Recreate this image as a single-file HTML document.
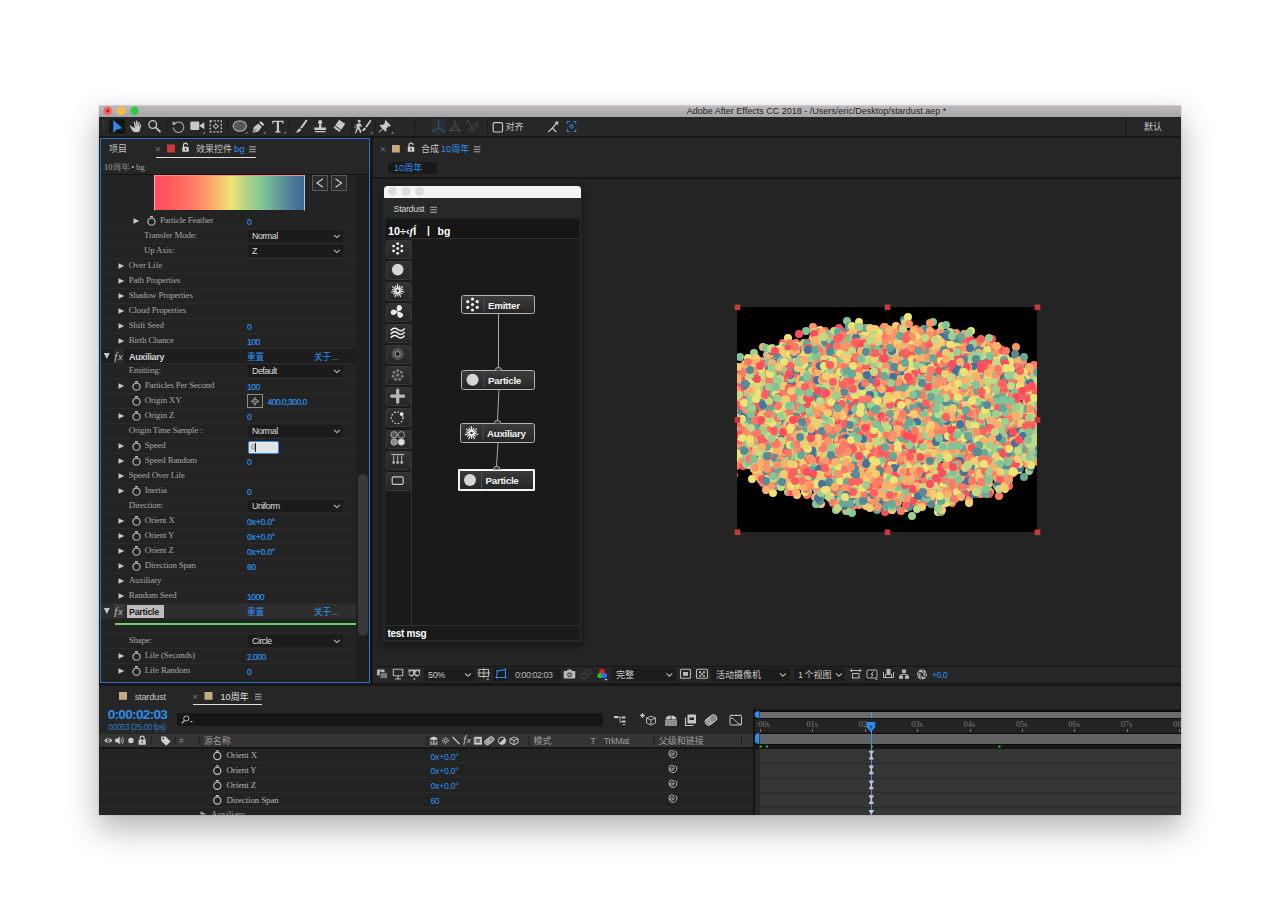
<!DOCTYPE html>
<html><head><meta charset="utf-8"><title>Adobe After Effects CC 2018</title>
<style>
html,body{margin:0;padding:0;background:#fff;}
body{width:1280px;height:923px;position:relative;overflow:hidden;font-family:"Liberation Sans",sans-serif;}
#root{position:absolute;left:0;top:0;width:1280px;height:923px;overflow:hidden;}
#root div,#root span{position:absolute;display:block;box-sizing:border-box;white-space:nowrap;}
.fs{font-family:"Liberation Sans",sans-serif;}
.fr{font-family:"Liberation Serif",serif;}
#ov{position:absolute;left:0;top:0;width:1280px;height:923px;pointer-events:none;}
#ov text{font-family:"Liberation Sans","Noto Sans CJK SC",sans-serif;}
#ov text.sr{font-family:"Liberation Serif","Noto Serif CJK SC",serif;}
</style></head>
<body><div id="root">
<div style="left:99px;top:106px;width:1082px;height:708.5px;background:#161616;box-shadow:0 13px 30px 1px rgba(0,0,0,.3),0 0 2px rgba(0,0,0,.2);"></div>
<div style="left:99px;top:105px;width:1082px;height:12px;background:linear-gradient(#bdb9bc,#a8a5a8);border-top:1px solid #cfcccf;"></div>
<span class="fs" style="left:600px;top:105px;font-size:9px;color:#1e1e1e;line-height:12px;width:433px;text-align:center;">Adobe After Effects CC 2018 - /Users/eric/Desktop/stardust.aep *</span>
<div style="left:99px;top:117px;width:1082px;height:19px;background:#272727;"></div>
<div style="left:109px;top:119px;width:16px;height:15px;background:#161616;"></div>
<div style="left:432px;top:119px;width:13.5px;height:15px;background:#2d2d2d;"></div>
<div style="left:100px;top:138px;width:270px;height:545px;background:#232323;border:1px solid #2b72c2;"></div>
<div style="left:101px;top:139px;width:268px;height:35px;background:#262626;"></div>
<div style="left:101px;top:174px;width:268px;height:1px;background:#141414;"></div>
<span class="fs" style="left:234px;top:142px;font-size:9.5px;color:#2e92ee;line-height:14px;">bg</span>
<div style="left:156px;top:157px;width:100px;height:1.3px;background:#e0e0e0;"></div>
<span class="fr" style="left:131.238px;top:160.3px;font-size:8.5px;color:#a8a8a8;line-height:14px;">• bg</span>
<div style="left:154px;top:175px;width:151px;height:36px;background:linear-gradient(90deg,#ff4d5e 0%,#ff5a5c 10%,#ff7a66 25%,#fca06a 36%,#f6c56e 44%,#f0e474 51%,#b9d585 60%,#7fc597 72%,#5f9a96 84%,#4a7799 93%,#3f6896 100%);border:1px solid #d8d8d8;border-top-color:#ff8a8a;border-bottom-color:#222;border-left-color:#ffb0b0;border-right-color:#b8c8da;"></div>
<div style="left:312px;top:175px;width:16px;height:16px;background:#2c2c2c;border:1px solid #5a5a5a;"></div>
<div style="left:330.5px;top:175px;width:16px;height:16px;background:#2c2c2c;border:1px solid #5a5a5a;"></div>
<div style="left:356px;top:175px;width:13px;height:507px;background:#1f1f1f;"></div>
<div style="left:357.5px;top:474px;width:10px;height:162px;background:#383838;border-radius:5px;"></div>
<div style="left:101px;top:228px;width:255px;height:1px;background:#2a2a2a;"></div>
<div style="left:101px;top:243px;width:255px;height:1px;background:#2a2a2a;"></div>
<div style="left:101px;top:258px;width:255px;height:1px;background:#2a2a2a;"></div>
<div style="left:101px;top:273px;width:255px;height:1px;background:#2a2a2a;"></div>
<div style="left:101px;top:288px;width:255px;height:1px;background:#2a2a2a;"></div>
<div style="left:101px;top:303px;width:255px;height:1px;background:#2a2a2a;"></div>
<div style="left:101px;top:318px;width:255px;height:1px;background:#2a2a2a;"></div>
<div style="left:101px;top:333px;width:255px;height:1px;background:#2a2a2a;"></div>
<div style="left:101px;top:348px;width:255px;height:1px;background:#2a2a2a;"></div>
<div style="left:101px;top:363px;width:255px;height:1px;background:#2a2a2a;"></div>
<div style="left:101px;top:378px;width:255px;height:1px;background:#2a2a2a;"></div>
<div style="left:101px;top:393px;width:255px;height:1px;background:#2a2a2a;"></div>
<div style="left:101px;top:408px;width:255px;height:1px;background:#2a2a2a;"></div>
<div style="left:101px;top:423px;width:255px;height:1px;background:#2a2a2a;"></div>
<div style="left:101px;top:438px;width:255px;height:1px;background:#2a2a2a;"></div>
<div style="left:101px;top:453px;width:255px;height:1px;background:#2a2a2a;"></div>
<div style="left:101px;top:468px;width:255px;height:1px;background:#2a2a2a;"></div>
<div style="left:101px;top:483px;width:255px;height:1px;background:#2a2a2a;"></div>
<div style="left:101px;top:498px;width:255px;height:1px;background:#2a2a2a;"></div>
<div style="left:101px;top:513px;width:255px;height:1px;background:#2a2a2a;"></div>
<div style="left:101px;top:528px;width:255px;height:1px;background:#2a2a2a;"></div>
<div style="left:101px;top:543px;width:255px;height:1px;background:#2a2a2a;"></div>
<div style="left:101px;top:558px;width:255px;height:1px;background:#2a2a2a;"></div>
<div style="left:101px;top:573px;width:255px;height:1px;background:#2a2a2a;"></div>
<div style="left:101px;top:588px;width:255px;height:1px;background:#2a2a2a;"></div>
<div style="left:101px;top:603px;width:255px;height:1px;background:#2a2a2a;"></div>
<div style="left:101px;top:618px;width:255px;height:1px;background:#2a2a2a;"></div>
<div style="left:101px;top:633px;width:255px;height:1px;background:#2a2a2a;"></div>
<div style="left:101px;top:648px;width:255px;height:1px;background:#2a2a2a;"></div>
<div style="left:101px;top:663px;width:255px;height:1px;background:#2a2a2a;"></div>
<span class="fr" style="left:160px;top:213.4px;font-size:8.9px;color:#a6a6a6;line-height:14px;letter-spacing:-.17px;">Particle Feather</span>
<span class="fs" style="left:247px;top:215.35px;font-size:8.6px;color:#2e92ee;line-height:14px;letter-spacing:-0.55px;-webkit-text-stroke:.2px #2e92ee;">0</span>
<span class="fr" style="left:144px;top:228.4px;font-size:8.9px;color:#a6a6a6;line-height:14px;letter-spacing:-.17px;">Transfer Mode:</span>
<div style="left:248px;top:229.75px;width:95px;height:12.3px;background:#1b1b1b;border-radius:1.5px;"></div>
<span class="fs" style="left:252px;top:229.25px;font-size:8.9px;color:#dcdcdc;line-height:14px;letter-spacing:-.5px;">Normal</span>
<span class="fr" style="left:144px;top:243.4px;font-size:8.9px;color:#a6a6a6;line-height:14px;letter-spacing:-.17px;">Up Axis:</span>
<div style="left:248px;top:244.75px;width:95px;height:12.3px;background:#1b1b1b;border-radius:1.5px;"></div>
<span class="fs" style="left:252px;top:244.25px;font-size:8.9px;color:#dcdcdc;line-height:14px;letter-spacing:-.5px;">Z</span>
<span class="fr" style="left:128.75px;top:258.4px;font-size:8.9px;color:#a6a6a6;line-height:14px;letter-spacing:-.17px;">Over Life</span>
<span class="fr" style="left:128.75px;top:273.4px;font-size:8.9px;color:#a6a6a6;line-height:14px;letter-spacing:-.17px;">Path Properties</span>
<span class="fr" style="left:128.75px;top:288.4px;font-size:8.9px;color:#a6a6a6;line-height:14px;letter-spacing:-.17px;">Shadow Properties</span>
<span class="fr" style="left:128.75px;top:303.4px;font-size:8.9px;color:#a6a6a6;line-height:14px;letter-spacing:-.17px;">Cloud Properties</span>
<span class="fr" style="left:128.75px;top:318.4px;font-size:8.9px;color:#a6a6a6;line-height:14px;letter-spacing:-.17px;">Shift Seed</span>
<span class="fs" style="left:247px;top:320.35px;font-size:8.6px;color:#2e92ee;line-height:14px;letter-spacing:-0.55px;-webkit-text-stroke:.2px #2e92ee;">0</span>
<span class="fr" style="left:128.75px;top:333.4px;font-size:8.9px;color:#a6a6a6;line-height:14px;letter-spacing:-.17px;">Birth Chance</span>
<span class="fs" style="left:247px;top:335.35px;font-size:8.6px;color:#2e92ee;line-height:14px;letter-spacing:-0.55px;-webkit-text-stroke:.2px #2e92ee;">100</span>
<div style="left:101px;top:349px;width:255px;height:14px;background:#1d1d1d;"></div>
<div style="left:113.5px;top:349px;width:10px;height:14px;background:#2b2b2b;"></div>
<span class="fr" style="left:114.3px;top:349.05px;font-size:11px;color:#c0c0c0;line-height:14px;"><i>f</i></span>
<span class="fs" style="left:118.2px;top:349.95px;font-size:8.5px;color:#c0c0c0;line-height:14px;"><i>x</i></span>
<span class="fs" style="left:129px;top:350.15px;font-size:9px;color:#d4d4d4;line-height:14px;font-weight:bold;letter-spacing:-.32px;">Auxiliary</span>
<span class="fs" style="left:331.5px;top:349.75px;font-size:8.6px;color:#2e92ee;line-height:14px;">...</span>
<span class="fr" style="left:128.75px;top:363.4px;font-size:8.9px;color:#a6a6a6;line-height:14px;letter-spacing:-.17px;">Emitting:</span>
<div style="left:248px;top:364.75px;width:95px;height:12.3px;background:#1b1b1b;border-radius:1.5px;"></div>
<span class="fs" style="left:252px;top:364.25px;font-size:8.9px;color:#dcdcdc;line-height:14px;letter-spacing:-.5px;">Default</span>
<span class="fr" style="left:144.75px;top:378.4px;font-size:8.9px;color:#a6a6a6;line-height:14px;letter-spacing:-.17px;">Particles Per Second</span>
<span class="fs" style="left:247px;top:380.35px;font-size:8.6px;color:#2e92ee;line-height:14px;letter-spacing:-0.55px;-webkit-text-stroke:.2px #2e92ee;">100</span>
<span class="fr" style="left:144.75px;top:393.4px;font-size:8.9px;color:#a6a6a6;line-height:14px;letter-spacing:-.17px;">Origin XY</span>
<div style="left:246.8px;top:394.45px;width:16.4px;height:13.5px;background:#262626;border:1px solid #8c8c8c;"></div>
<span class="fs" style="left:267.5px;top:395.35px;font-size:8.6px;color:#2e92ee;line-height:14px;letter-spacing:-0.55px;-webkit-text-stroke:.2px #2e92ee;">400.0,300.0</span>
<span class="fr" style="left:144.75px;top:408.4px;font-size:8.9px;color:#a6a6a6;line-height:14px;letter-spacing:-.17px;">Origin Z</span>
<span class="fs" style="left:247px;top:410.35px;font-size:8.6px;color:#2e92ee;line-height:14px;letter-spacing:-0.55px;-webkit-text-stroke:.2px #2e92ee;">0</span>
<span class="fr" style="left:128.75px;top:423.4px;font-size:8.9px;color:#a6a6a6;line-height:14px;letter-spacing:-.17px;">Origin Time Sample :</span>
<div style="left:248px;top:424.75px;width:95px;height:12.3px;background:#1b1b1b;border-radius:1.5px;"></div>
<span class="fs" style="left:252px;top:424.25px;font-size:8.9px;color:#dcdcdc;line-height:14px;letter-spacing:-.5px;">Normal</span>
<span class="fr" style="left:144.75px;top:438.4px;font-size:8.9px;color:#a6a6a6;line-height:14px;letter-spacing:-.17px;">Speed</span>
<div style="left:248px;top:441.25px;width:31px;height:12.3px;background:#e4e4e4;border:1px solid #2d8ceb;border-radius:2px;"></div>
<span class="fr" style="left:251px;top:440.25px;font-size:8.6px;color:#555;line-height:14px;">0</span>
<div style="left:255.3px;top:443.25px;width:1px;height:9px;background:#222;"></div>
<span class="fr" style="left:144.75px;top:453.4px;font-size:8.9px;color:#a6a6a6;line-height:14px;letter-spacing:-.17px;">Speed Random</span>
<span class="fs" style="left:247px;top:455.35px;font-size:8.6px;color:#2e92ee;line-height:14px;letter-spacing:-0.55px;-webkit-text-stroke:.2px #2e92ee;">0</span>
<span class="fr" style="left:128.75px;top:468.4px;font-size:8.9px;color:#a6a6a6;line-height:14px;letter-spacing:-.17px;">Speed Over Life</span>
<span class="fr" style="left:144.75px;top:483.4px;font-size:8.9px;color:#a6a6a6;line-height:14px;letter-spacing:-.17px;">Inertia</span>
<span class="fs" style="left:247px;top:485.35px;font-size:8.6px;color:#2e92ee;line-height:14px;letter-spacing:-0.55px;-webkit-text-stroke:.2px #2e92ee;">0</span>
<span class="fr" style="left:128.75px;top:498.4px;font-size:8.9px;color:#a6a6a6;line-height:14px;letter-spacing:-.17px;">Direction:</span>
<div style="left:248px;top:499.75px;width:95px;height:12.3px;background:#1b1b1b;border-radius:1.5px;"></div>
<span class="fs" style="left:252px;top:499.25px;font-size:8.9px;color:#dcdcdc;line-height:14px;letter-spacing:-.5px;">Uniform</span>
<span class="fr" style="left:144.75px;top:513.4px;font-size:8.9px;color:#a6a6a6;line-height:14px;letter-spacing:-.17px;">Orient X</span>
<span class="fs" style="left:247px;top:515.35px;font-size:8.6px;color:#2e92ee;line-height:14px;letter-spacing:-0.2px;-webkit-text-stroke:.2px #2e92ee;">0x+0.0°</span>
<span class="fr" style="left:144.75px;top:528.4px;font-size:8.9px;color:#a6a6a6;line-height:14px;letter-spacing:-.17px;">Orient Y</span>
<span class="fs" style="left:247px;top:530.35px;font-size:8.6px;color:#2e92ee;line-height:14px;letter-spacing:-0.2px;-webkit-text-stroke:.2px #2e92ee;">0x+0.0°</span>
<span class="fr" style="left:144.75px;top:543.4px;font-size:8.9px;color:#a6a6a6;line-height:14px;letter-spacing:-.17px;">Orient Z</span>
<span class="fs" style="left:247px;top:545.35px;font-size:8.6px;color:#2e92ee;line-height:14px;letter-spacing:-0.2px;-webkit-text-stroke:.2px #2e92ee;">0x+0.0°</span>
<span class="fr" style="left:144.75px;top:558.4px;font-size:8.9px;color:#a6a6a6;line-height:14px;letter-spacing:-.17px;">Direction Span</span>
<span class="fs" style="left:247px;top:560.35px;font-size:8.6px;color:#2e92ee;line-height:14px;letter-spacing:-0.55px;-webkit-text-stroke:.2px #2e92ee;">60</span>
<span class="fr" style="left:128.75px;top:573.4px;font-size:8.9px;color:#a6a6a6;line-height:14px;letter-spacing:-.17px;">Auxiliary</span>
<span class="fr" style="left:128.75px;top:588.4px;font-size:8.9px;color:#a6a6a6;line-height:14px;letter-spacing:-.17px;">Random Seed</span>
<span class="fs" style="left:247px;top:590.35px;font-size:8.6px;color:#2e92ee;line-height:14px;letter-spacing:-0.55px;-webkit-text-stroke:.2px #2e92ee;">1000</span>
<div style="left:101px;top:604px;width:255px;height:14px;background:#2e2e2e;"></div>
<div style="left:113.5px;top:604px;width:10px;height:14px;background:#383838;"></div>
<span class="fr" style="left:114.3px;top:604.05px;font-size:11px;color:#c0c0c0;line-height:14px;"><i>f</i></span>
<span class="fs" style="left:118.2px;top:604.95px;font-size:8.5px;color:#c0c0c0;line-height:14px;"><i>x</i></span>
<div style="left:126.7px;top:604.5px;width:37.6px;height:13px;background:#bcbcbc;"></div>
<span class="fs" style="left:129px;top:604.95px;font-size:9px;color:#1c1c1c;line-height:14px;font-weight:bold;letter-spacing:-.32px;">Particle</span>
<span class="fs" style="left:331.5px;top:604.75px;font-size:8.6px;color:#2e92ee;line-height:14px;">...</span>
<div style="left:115px;top:622.5px;width:241px;height:2px;background:#5fd65f;"></div>
<span class="fr" style="left:128.75px;top:633.4px;font-size:8.9px;color:#a6a6a6;line-height:14px;letter-spacing:-.17px;">Shape:</span>
<div style="left:248px;top:634.75px;width:95px;height:12.3px;background:#1b1b1b;border-radius:1.5px;"></div>
<span class="fs" style="left:252px;top:634.25px;font-size:8.9px;color:#dcdcdc;line-height:14px;letter-spacing:-.5px;">Circle</span>
<span class="fr" style="left:144.75px;top:648.4px;font-size:8.9px;color:#a6a6a6;line-height:14px;letter-spacing:-.17px;">Life (Seconds)</span>
<span class="fs" style="left:247px;top:650.35px;font-size:8.6px;color:#2e92ee;line-height:14px;letter-spacing:-0.55px;-webkit-text-stroke:.2px #2e92ee;">2.000</span>
<span class="fr" style="left:144.75px;top:663.4px;font-size:8.9px;color:#a6a6a6;line-height:14px;letter-spacing:-.17px;">Life Random</span>
<span class="fs" style="left:247px;top:665.35px;font-size:8.6px;color:#2e92ee;line-height:14px;letter-spacing:-0.55px;-webkit-text-stroke:.2px #2e92ee;">0</span>
<div style="left:373px;top:138px;width:808px;height:39px;background:#262626;"></div>
<div style="left:373px;top:179px;width:808px;height:487px;background:#242424;"></div>
<div style="left:373px;top:667px;width:808px;height:16px;background:#262626;"></div>
<div style="left:388px;top:162px;width:49px;height:11.5px;background:#1a1a1a;border-radius:1.5px;"></div>
<div style="left:737px;top:307px;width:300px;height:225px;background:#000;"></div>
<div style="left:383px;top:186px;width:198.5px;height:456px;background:transparent;box-shadow:0 3px 9px rgba(0,0,0,.45);border-radius:3px 3px 0 0;"></div>
<div style="left:384px;top:186px;width:196.5px;height:12.5px;background:#f4f4f4;border-radius:3.5px 3.5px 0 0;"></div>
<div style="left:384px;top:198px;width:196.5px;height:443px;background:#1b1a1b;border:1px solid #2a2a2a;border-top:none;border-right:2px solid #242424;border-left:2px solid #242424;"></div>
<div style="left:384px;top:198px;width:196.5px;height:19.5px;background:#282828;"></div>
<span class="fs" style="left:393.5px;top:202.3px;font-size:9px;color:#d2d2d2;line-height:14px;letter-spacing:-.35px;">Stardust</span>
<div style="left:386px;top:220px;width:192.5px;height:17.8px;background:#171617;"></div>
<span class="fs" style="left:388px;top:223.7px;font-size:10.8px;color:#fff;line-height:14px;font-weight:bold;letter-spacing:0px;">10÷‹<i style="font-family:'Liberation Serif',serif">f</i>Í</span>
<span class="fs" style="left:427px;top:223.7px;font-size:10px;color:#fff;line-height:14px;font-weight:bold;">|</span>
<span class="fs" style="left:437.5px;top:223.7px;font-size:10.5px;color:#fff;line-height:14px;font-weight:bold;">bg</span>
<div style="left:386px;top:237.5px;width:192.5px;height:1px;background:#2e2e2e;"></div>
<div style="left:410.5px;top:239px;width:1px;height:386px;background:#2e2e2e;"></div>
<div style="left:386px;top:624.5px;width:192.5px;height:1px;background:#2e2e2e;"></div>
<span class="fs" style="left:387.5px;top:626.5px;font-size:10px;color:#fff;line-height:14px;font-weight:bold;letter-spacing:-.3px;">test msg</span>
<div style="left:386px;top:239.5px;width:24.5px;height:19px;background:linear-gradient(#323232,#262626);border:1px solid #393939;border-radius:1.5px;"></div>
<div style="left:386px;top:260.5px;width:24.5px;height:19px;background:linear-gradient(#323232,#262626);border:1px solid #393939;border-radius:1.5px;"></div>
<div style="left:386px;top:281.5px;width:24.5px;height:19px;background:linear-gradient(#323232,#262626);border:1px solid #393939;border-radius:1.5px;"></div>
<div style="left:386px;top:302.5px;width:24.5px;height:19px;background:linear-gradient(#323232,#262626);border:1px solid #393939;border-radius:1.5px;"></div>
<div style="left:386px;top:324px;width:24.5px;height:19px;background:linear-gradient(#323232,#262626);border:1px solid #393939;border-radius:1.5px;"></div>
<div style="left:386px;top:345px;width:24.5px;height:19px;background:linear-gradient(#323232,#262626);border:1px solid #393939;border-radius:1.5px;"></div>
<div style="left:386px;top:366px;width:24.5px;height:19px;background:linear-gradient(#323232,#262626);border:1px solid #393939;border-radius:1.5px;"></div>
<div style="left:386px;top:387px;width:24.5px;height:19px;background:linear-gradient(#323232,#262626);border:1px solid #393939;border-radius:1.5px;"></div>
<div style="left:386px;top:408px;width:24.5px;height:19px;background:linear-gradient(#323232,#262626);border:1px solid #393939;border-radius:1.5px;"></div>
<div style="left:386px;top:429.5px;width:24.5px;height:19px;background:linear-gradient(#323232,#262626);border:1px solid #393939;border-radius:1.5px;"></div>
<div style="left:386px;top:450.5px;width:24.5px;height:19px;background:linear-gradient(#323232,#262626);border:1px solid #393939;border-radius:1.5px;"></div>
<div style="left:386px;top:471.5px;width:24.5px;height:19px;background:linear-gradient(#323232,#262626);border:1px solid #393939;border-radius:1.5px;"></div>
<div style="left:460.5px;top:295px;width:74.5px;height:19px;background:linear-gradient(#3c3c3c,#262626);border:1px solid #b4b4b4;border-radius:2.5px;"></div>
<span class="fs" style="left:488px;top:298.6px;font-size:9.8px;color:#f2f2f2;line-height:14px;font-weight:bold;letter-spacing:-.3px;">Emitter</span>
<div style="left:460.5px;top:370px;width:74.5px;height:19.5px;background:linear-gradient(#3c3c3c,#262626);border:1px solid #b4b4b4;border-radius:2.5px;"></div>
<span class="fs" style="left:488px;top:373.85px;font-size:9.8px;color:#f2f2f2;line-height:14px;font-weight:bold;letter-spacing:-.3px;">Particle</span>
<div style="left:459.5px;top:423px;width:75px;height:20px;background:linear-gradient(#3c3c3c,#262626);border:1px solid #b4b4b4;border-radius:2.5px;"></div>
<span class="fs" style="left:487px;top:427.1px;font-size:9.8px;color:#f2f2f2;line-height:14px;font-weight:bold;letter-spacing:-.3px;">Auxiliary</span>
<div style="left:458px;top:469px;width:77px;height:22px;background:linear-gradient(#3a3a3a,#262626);border:2px solid #f4f4f4;border-radius:1px;"></div>
<span class="fs" style="left:485.5px;top:474.1px;font-size:9.8px;color:#f2f2f2;line-height:14px;font-weight:bold;letter-spacing:-.3px;">Particle</span>
<div style="left:424px;top:668px;width:50.5px;height:12.8px;background:#1c1c1c;border-radius:1.5px;"></div>
<span class="fs" style="left:428px;top:668px;font-size:8.9px;color:#c8c8c8;line-height:14px;letter-spacing:-.3px;">50%</span>
<div style="left:493px;top:667.5px;width:14.5px;height:13.5px;background:#1a1a1a;"></div>
<div style="left:509px;top:668px;width:52px;height:12.8px;background:#1e1e1e;"></div>
<span class="fs" style="left:515px;top:668.2px;font-size:8.9px;color:#b4b4b4;line-height:14px;letter-spacing:-.45px;">0:00:02:03</span>
<div style="left:611px;top:668px;width:65px;height:12.8px;background:#1c1c1c;border-radius:1.5px;"></div>
<div style="left:711px;top:668px;width:78.5px;height:12.8px;background:#1c1c1c;border-radius:1.5px;"></div>
<div style="left:794px;top:668px;width:51px;height:12.8px;background:#1c1c1c;border-radius:1.5px;"></div>
<span class="fs" style="left:798px;top:668px;font-size:8.9px;color:#c8c8c8;line-height:14px;">1</span>
<div style="left:865px;top:667.5px;width:14px;height:13.5px;background:#1c1c1c;"></div>
<span class="fs" style="left:932px;top:668px;font-size:8.6px;color:#2e92ee;line-height:14px;letter-spacing:-.5px;">+0.0</span>
<div style="left:99px;top:686px;width:1082px;height:128.5px;background:#262626;"></div>
<span class="fs" style="left:134.7px;top:689.5px;font-size:9.3px;color:#c4c4c4;line-height:14px;letter-spacing:-.25px;">stardust</span>
<div style="left:193px;top:704px;width:69px;height:1.4px;background:#e0e0e0;"></div>
<span class="fs" style="left:107.7px;top:707.3px;font-size:13.6px;color:#2d8ceb;line-height:16px;font-weight:bold;letter-spacing:-.7px;">0:00:02:03</span>
<span class="fs" style="left:108.3px;top:721.8px;font-size:8.3px;color:#2a76c4;line-height:10px;letter-spacing:-.45px;">00053 (25.00 fps)</span>
<div style="left:177px;top:713px;width:426px;height:13px;background:#161616;border-radius:2px;"></div>
<div style="left:99px;top:734px;width:654px;height:13px;background:#343434;"></div>
<span class="fs" style="left:179px;top:734px;font-size:8px;color:#8a8a8a;line-height:14px;"><i>#</i></span>
<span class="fr" style="left:463.3px;top:733.3px;font-size:10.5px;color:#cfcfcf;line-height:14px;"><i>f</i></span>
<span class="fs" style="left:466.8px;top:734.2px;font-size:8px;color:#cfcfcf;line-height:14px;"><i>x</i></span>
<span class="fs" style="left:590.5px;top:734.3px;font-size:8.6px;color:#9c9c9c;line-height:14px;">T</span>
<span class="fs" style="left:603.8px;top:734.3px;font-size:8.9px;color:#9c9c9c;line-height:14px;letter-spacing:-.35px;">TrkMat</span>
<div style="left:99px;top:747px;width:654px;height:67.5px;background:#232323;"></div>
<div style="left:99px;top:747px;width:654px;height:1.5px;background:#161616;"></div>
<div style="left:99px;top:762px;width:654px;height:1px;background:#2a2a2a;"></div>
<span class="fr" style="left:226.5px;top:748px;font-size:8.9px;color:#b4b4b4;line-height:14px;letter-spacing:-.1px;">Orient X</span>
<span class="fs" style="left:430.5px;top:749.6px;font-size:8.6px;color:#2e92ee;line-height:14px;letter-spacing:-0.2px;">0x+0.0°</span>
<div style="left:99px;top:777px;width:654px;height:1px;background:#2a2a2a;"></div>
<span class="fr" style="left:226.5px;top:762.85px;font-size:8.9px;color:#b4b4b4;line-height:14px;letter-spacing:-.1px;">Orient Y</span>
<span class="fs" style="left:430.5px;top:764.45px;font-size:8.6px;color:#2e92ee;line-height:14px;letter-spacing:-0.2px;">0x+0.0°</span>
<div style="left:99px;top:792px;width:654px;height:1px;background:#2a2a2a;"></div>
<span class="fr" style="left:226.5px;top:777.7px;font-size:8.9px;color:#b4b4b4;line-height:14px;letter-spacing:-.1px;">Orient Z</span>
<span class="fs" style="left:430.5px;top:779.3px;font-size:8.6px;color:#2e92ee;line-height:14px;letter-spacing:-0.2px;">0x+0.0°</span>
<div style="left:99px;top:807px;width:654px;height:1px;background:#2a2a2a;"></div>
<span class="fr" style="left:226.5px;top:792.55px;font-size:8.9px;color:#b4b4b4;line-height:14px;letter-spacing:-.1px;">Direction Span</span>
<span class="fs" style="left:430.5px;top:794.15px;font-size:8.6px;color:#2e92ee;line-height:14px;letter-spacing:-0.55px;">60</span>
<div style="left:211px;top:808px;width:60px;height:6.500px;overflow:hidden"><span class="fr" style="left:0;top:-1.500px;font-size:8.900px;line-height:14px;color:#a8a8a8">Auxiliary</span></div>
<div style="left:753px;top:708px;width:2px;height:106.5px;background:#141414;"></div>
<div style="left:755px;top:708px;width:426px;height:26px;background:#232323;"></div>
<div style="left:755px;top:710px;width:426px;height:9px;background:#0c0c0c;"></div>
<div style="left:759.5px;top:711.5px;width:421.5px;height:6px;background:#6c6c6c;"></div>
<div style="left:870.5px;top:711.5px;width:1.2px;height:6px;background:#4a9af0;"></div>
<div style="left:760px;top:729px;width:1px;height:3px;background:#7c7c7c;"></div>
<div style="left:755.500px;top:718.600px;width:20px;height:12px;overflow:hidden"><span class="fr" style="left:-3.500px;top:0;font-size:8.400px;line-height:12px;color:#7a7a7a;letter-spacing:-.1px">0:00s</span></div>
<div style="left:812px;top:729px;width:1px;height:3px;background:#7c7c7c;"></div>
<span class="fr" style="left:806.38px;top:718.6px;font-size:8.4px;color:#7a7a7a;line-height:12px;">01s</span>
<div style="left:864.5px;top:729px;width:1px;height:3px;background:#7c7c7c;"></div>
<span class="fr" style="left:858.76px;top:718.6px;font-size:8.4px;color:#7a7a7a;line-height:12px;">02s</span>
<div style="left:917px;top:729px;width:1px;height:3px;background:#7c7c7c;"></div>
<span class="fr" style="left:911.14px;top:718.6px;font-size:8.4px;color:#7a7a7a;line-height:12px;">03s</span>
<div style="left:969.5px;top:729px;width:1px;height:3px;background:#7c7c7c;"></div>
<span class="fr" style="left:963.52px;top:718.6px;font-size:8.4px;color:#7a7a7a;line-height:12px;">04s</span>
<div style="left:1021.5px;top:729px;width:1px;height:3px;background:#7c7c7c;"></div>
<span class="fr" style="left:1015.9px;top:718.6px;font-size:8.4px;color:#7a7a7a;line-height:12px;">05s</span>
<div style="left:1074px;top:729px;width:1px;height:3px;background:#7c7c7c;"></div>
<span class="fr" style="left:1068.28px;top:718.6px;font-size:8.4px;color:#7a7a7a;line-height:12px;">06s</span>
<div style="left:1126.5px;top:729px;width:1px;height:3px;background:#7c7c7c;"></div>
<span class="fr" style="left:1120.66px;top:718.6px;font-size:8.4px;color:#7a7a7a;line-height:12px;">07s</span>
<div style="left:1179px;top:729px;width:1px;height:3px;background:#7c7c7c;"></div>
<div style="left:1168px;top:718.600px;width:13px;height:12px;overflow:hidden"><span class="fr" style="left:5px;top:0;font-size:8.400px;line-height:12px;color:#7a7a7a">08s</span></div>
<div style="left:755px;top:732.5px;width:426px;height:12.5px;background:#0c0c0c;"></div>
<div style="left:759.5px;top:733.5px;width:421.5px;height:10px;background:#636363;"></div>
<div style="left:755px;top:745px;width:426px;height:3.5px;background:#161616;"></div>
<div style="left:755px;top:748.5px;width:4.5px;height:66px;background:#292929;"></div>
<div style="left:759.5px;top:748.5px;width:421.5px;height:66px;background:#353535;"></div>
<div style="left:759.5px;top:762.5px;width:421.5px;height:1.2px;background:#2b2b2b;"></div>
<div style="left:759.5px;top:777.5px;width:421.5px;height:1.2px;background:#2b2b2b;"></div>
<div style="left:759.5px;top:792px;width:421.5px;height:1.2px;background:#2b2b2b;"></div>
<div style="left:759.5px;top:806.5px;width:421.5px;height:1.2px;background:#2b2b2b;"></div>
<div style="left:870.6px;top:722px;width:1.3px;height:92.5px;background:#4a90e0;"></div>
<svg id="ov" width="1280" height="923" viewBox="0 0 1280 923"><clipPath id="winclip"><rect x="99" y="105" width="1082" height="709.500"/></clipPath><g clip-path="url(#winclip)">
<circle cx="107.7" cy="110.8" r="4.2" fill="#fc5b57"/>
<circle cx="107.7" cy="110.8" r="1.3" fill="#7a1410"/>
<circle cx="121.2" cy="110.8" r="4.2" fill="#fdbc40"/>
<circle cx="134.6" cy="110.8" r="4.2" fill="#34c84a"/>
<path d="M103.5 120v12" stroke="#3a3a3a" stroke-width="2" stroke-dasharray="1 1"/>
<path d="M113.3 120v12.9l3.3-3.4 5.7-1.3z" fill="#2d8ceb"/>
<g fill="#c8c8c8"><path d="M131.2 126.2c-.9-1-2-1.2-1.5-.2l2.6 4.6c.6 1 1.6 1.6 3 1.6h2.2c1.3 0 2.1-.8 2.4-2l1.3-5c.3-1.1-.8-1.3-1.1-.3l-.8 2.4.3-4.8c0-1.1-1.3-1.1-1.4 0l-.4 4.2-.4-5.3c-.1-1.1-1.4-1.1-1.4 0l.1 5.3-1-4.5c-.3-1.1-1.5-.8-1.3.3l1 5.6z"/></g>
<g fill="none" stroke="#c8c8c8" stroke-width="1.3"><circle cx="152.7" cy="124.5" r="3.8"/><path d="M155.5 127.4l5 4.6" stroke-width="1.7"/></g>
<path d="M166.5 119V134" stroke="#1b1b1b" stroke-width="1"/>
<g fill="none" stroke="#a4a4a4" stroke-width="1.1"><path d="M175.3 123.2a5.2 5.2 0 1 1-1.9 4.3"/></g><path d="M172.5 121l.3 4.3 3.9-1.5z" fill="#b4b4b4"/>
<g fill="#c8c8c8"><rect x="190.3" y="121.5" width="9" height="8.5" rx="1.3"/><path d="M199.5 125.5l4.8-3.2v7l-4.8-3.2z"/><path d="M205 131.5v2h-2z" fill="#aaa"/></g>
<g fill="none" stroke="#c8c8c8"><rect x="210.3" y="120.8" width="11" height="11" stroke-width="1.3" stroke-dasharray="2 1.5"/></g><g fill="#c8c8c8"><path d="M212.5 126.3l2-1.6v3.2zM219.1 126.3l-2-1.6v3.2zM215.8 123l-1.6 2h3.2zM215.8 129.6l-1.6-2h3.2z"/></g>
<path d="M227.8 119V134" stroke="#1b1b1b" stroke-width="1"/>
<ellipse cx="239.8" cy="126" rx="6.6" ry="5.2" fill="#555" stroke="#aaa" stroke-width="1.2"/><path d="M247.3 131.6v2h-2z" fill="#aaa"/>
<g fill="#c8c8c8"><path d="M252.6 132.8l1.2-5.6 4.6-3.6 3.4 3.4-3.6 4.6zM259.3 122.7l1.6-1.7 3.5 3.5-1.7 1.6z"/></g><path d="M253 132.4l3.6-3.6" stroke="#272727" stroke-width=".8"/><path d="M265.3 131.6v2h-2z" fill="#aaa"/>
<path d="M272.3 120.8h11.2v3h-1l-.5-1.7h-3v9l1.6.4v.9h-5.4v-.9l1.6-.4v-9h-3l-.5 1.7h-1z" fill="#c8c8c8"/><path d="M285.6 131.6v2h-2z" fill="#aaa"/>
<path d="M289.5 119V134" stroke="#1b1b1b" stroke-width="1"/>
<g fill="#c8c8c8"><path d="M306.8 119.8c.7.4.6 1.1.2 1.7l-5.2 7.2-1.7-1.2 5.3-7.2c.4-.6.9-.8 1.4-.5zM299.5 128.3l1.7 1.2c-.5 1.7-2.5 3.2-5.4 3 1.5-1.1 1.6-3.2 3.7-4.2z"/></g>
<g fill="#c8c8c8"><circle cx="320.2" cy="122.2" r="2.1"/><path d="M319.3 123.5h1.8l.5 4h-2.8zM314.3 127.5h11.8v2.6h-11.8zM315 131h10.4v1.3h-10.4z"/></g>
<g fill="#c8c8c8"><path d="M339.2 119.8l6 4.3-5.6 7.9-6-4.3z"/></g><path d="M335.2 125.9l6 4.3" stroke="#272727" stroke-width="1"/>
<path d="M351.8 119V134" stroke="#1b1b1b" stroke-width="1"/>
<g fill="#c8c8c8"><circle cx="359.2" cy="121.2" r="1.4"/><path d="M356.2 124.5l3-1.5 2 1.3.6 2.7-1 .3-.8-1.8-.6 2.3 1.8 2.6-.2 2.5h-1.2l-.2-2-2-2-1.3 4.3h-1.3l1.5-5.4.4-2.5-1.3.8-.4 2h-1zM370.8 120c.6.4.5 1 .2 1.5l-4.3 6.2-1.5-1 4.4-6.3c.3-.5.8-.7 1.2-.4zM364.5 127.5l1.5 1c-.4 1.5-2 2.7-4.5 2.6 1.3-1 1.3-2.8 3-3.6z"/></g><path d="M372.3 131.6v2h-2z" fill="#aaa"/>
<path d="M375 119V134" stroke="#1b1b1b" stroke-width="1"/>
<g fill="#c8c8c8"><path d="M385.2 119.8l5.6 5.6-1.2 1.1-1-.3-2.3 2.3.2 2.2-1 1-2.7-2.7-3.3 3.4-.6-.6 3.4-3.3-2.7-2.7 1-1 2.2.2 2.3-2.3-.3-1z"/></g><path d="M393.2 131.6v2h-2z" fill="#aaa"/>
<path d="M415 119V134" stroke="#1b1b1b" stroke-width="1"/>
<g fill="none" stroke="#245a91" stroke-width="1"><path d="M438.5 121.5v6.5l-5 3M438.5 128l5 3"/></g><g fill="#245a91"><circle cx="438.5" cy="121.5" r="1.1"/><circle cx="433.5" cy="131" r="1.1"/><circle cx="443.5" cy="131" r="1.1"/></g>
<g fill="none" stroke="#484848" stroke-width="1"><path d="M454.8 121.5v5l-4.8 4M454.8 126.5l5 4M450 130.5h10l-5.2-7z"/></g><g fill="#484848"><circle cx="454.8" cy="121.5" r="1.1"/><circle cx="450" cy="130.8" r="1.1"/><circle cx="459.8" cy="130.8" r="1.1"/></g>
<g fill="none" stroke="#484848" stroke-width="1"><path d="M468 121l4 5.5v4l5-3.5v-4.5l-5 4M468.5 130.5l3.5-4"/></g><g fill="#484848"><circle cx="468" cy="121" r="1.1"/></g>
<path d="M487.5 119V134" stroke="#1b1b1b" stroke-width="1"/>
<rect x="493.2" y="122.7" width="9.3" height="9.3" rx="1.2" fill="none" stroke="#c8c8c8" stroke-width="1.2"/>
<text x="505.5" y="130.44" font-size="9" fill="#c8c8c8">对齐</text>
<g fill="none" stroke="#c8c8c8" stroke-width="1.2"><path d="M548.3 132l4-4 4 4M552.3 128l5-5.5"/></g><path d="M558.5 121.3l-4 .6 3.4 3.4z" fill="#c8c8c8"/>
<g fill="none" stroke="#2a80d8" stroke-width="1.1"><path d="M567.3 124v-2.5h2.5M573.3 121.5h2.5v2.5M575.8 129v2.5h-2.5M569.8 131.5h-2.5v-2.5"/><circle cx="571.5" cy="126.5" r="1.6"/></g>
<path d="M1126 117V136" stroke="#1b1b1b" stroke-width="1"/>
<text x="1144" y="130.24" font-size="9" fill="#c8c8c8">默认</text>
<text x="109" y="152.24" font-size="9" fill="#c4c4c4">项目</text>
<path d="M155.8 147.3l4 4M159.8 147.3l-4 4" stroke="#8a8a8a" stroke-width=".9"/>
<rect x="167" y="144.5" width="8" height="8" fill="#c93a3c"/>
<g><rect x="182.3" y="146.8" width="6.5" height="5" rx=".6" fill="#d0d0d0"/><path d="M183.5 147.1v-2a2 2 0 0 1 4 0" fill="none" stroke="#d0d0d0" stroke-width="1.2"/><rect x="184.9" y="148.3" width="1.3" height="2" fill="#262626"/></g>
<text x="196" y="152.24" font-size="9" fill="#c4c4c4">效果控件</text>
<path d="M249.3 146.8h6.5M249.3 149.3h6.5M249.3 151.8h6.5" stroke="#b0b0b0" stroke-width="1"/>
<text class="sr" x="104" y="170.36" font-size="8.5" fill="#a8a8a8">10<tspan x="112.74">周年</tspan></text>
<path d="M323 178.8l-6 4.2 6 4.2" fill="none" stroke="#d0d0d0" stroke-width="1.1"/>
<path d="M335.5 178.8l6 4.2-6 4.2" fill="none" stroke="#d0d0d0" stroke-width="1.1"/>
<path d="M133.5 218.15v5.6l5.8-2.8z" fill="#c8c8c8"/>
<g fill="none" stroke="#b8b8b8"><circle cx="151.5" cy="221.65" r="3.6" stroke-width="1.2"/><path d="M150 216.65h3" stroke-width="1.3"/></g>
<path d="M334 234.85l2.9 2.7 2.9-2.7" fill="none" stroke="#c0c0c0" stroke-width="1.1"/>
<path d="M334 249.85l2.9 2.7 2.9-2.7" fill="none" stroke="#c0c0c0" stroke-width="1.1"/>
<path d="M118.5 263.15v5.6l5.8-2.8z" fill="#c8c8c8"/>
<path d="M118.5 278.15v5.6l5.8-2.8z" fill="#c8c8c8"/>
<path d="M118.5 293.15v5.6l5.8-2.8z" fill="#c8c8c8"/>
<path d="M118.5 308.15v5.6l5.8-2.8z" fill="#c8c8c8"/>
<path d="M118.5 323.15v5.6l5.8-2.8z" fill="#c8c8c8"/>
<path d="M118.5 338.15v5.6l5.8-2.8z" fill="#c8c8c8"/>
<path d="M103.8 353.05h6l-3 6z" fill="#c8c8c8"/>
<text x="247" y="359.85" font-size="8.6" fill="#2e92ee">重置</text>
<text x="314" y="359.85" font-size="8.6" fill="#2e92ee">关于</text>
<path d="M334 369.85l2.9 2.7 2.9-2.7" fill="none" stroke="#c0c0c0" stroke-width="1.1"/>
<path d="M118.5 383.15v5.6l5.8-2.8z" fill="#c8c8c8"/>
<g fill="none" stroke="#b8b8b8"><circle cx="136.5" cy="386.65" r="3.6" stroke-width="1.2"/><path d="M135 381.65h3" stroke-width="1.3"/></g>
<g fill="none" stroke="#b8b8b8"><circle cx="136.5" cy="401.65" r="3.6" stroke-width="1.2"/><path d="M135 396.65h3" stroke-width="1.3"/></g>
<g fill="none" stroke="#c0c0c0" stroke-width=".9"><circle cx="255" cy="401.25" r="2.3"/><path d="M250.8 401.25h2M257.3 401.25h2M255 396.95v2M255 403.55v2"/></g><circle cx="255" cy="401.25" r=".7" fill="#c0c0c0"/>
<path d="M118.5 413.15v5.6l5.8-2.8z" fill="#c8c8c8"/>
<g fill="none" stroke="#b8b8b8"><circle cx="136.5" cy="416.65" r="3.6" stroke-width="1.2"/><path d="M135 411.65h3" stroke-width="1.3"/></g>
<path d="M334 429.85l2.9 2.7 2.9-2.7" fill="none" stroke="#c0c0c0" stroke-width="1.1"/>
<path d="M118.5 443.15v5.6l5.8-2.8z" fill="#c8c8c8"/>
<g fill="none" stroke="#b8b8b8"><circle cx="136.5" cy="446.65" r="3.6" stroke-width="1.2"/><path d="M135 441.65h3" stroke-width="1.3"/></g>
<path d="M118.5 458.15v5.6l5.8-2.8z" fill="#c8c8c8"/>
<g fill="none" stroke="#b8b8b8"><circle cx="136.5" cy="461.65" r="3.6" stroke-width="1.2"/><path d="M135 456.65h3" stroke-width="1.3"/></g>
<path d="M118.5 473.15v5.6l5.8-2.8z" fill="#c8c8c8"/>
<path d="M118.5 488.15v5.6l5.8-2.8z" fill="#c8c8c8"/>
<g fill="none" stroke="#b8b8b8"><circle cx="136.5" cy="491.65" r="3.6" stroke-width="1.2"/><path d="M135 486.65h3" stroke-width="1.3"/></g>
<path d="M334 504.85l2.9 2.7 2.9-2.7" fill="none" stroke="#c0c0c0" stroke-width="1.1"/>
<path d="M118.5 518.15v5.6l5.8-2.8z" fill="#c8c8c8"/>
<g fill="none" stroke="#b8b8b8"><circle cx="136.5" cy="521.65" r="3.6" stroke-width="1.2"/><path d="M135 516.65h3" stroke-width="1.3"/></g>
<path d="M118.5 533.15v5.6l5.8-2.8z" fill="#c8c8c8"/>
<g fill="none" stroke="#b8b8b8"><circle cx="136.5" cy="536.65" r="3.6" stroke-width="1.2"/><path d="M135 531.65h3" stroke-width="1.3"/></g>
<path d="M118.5 548.15v5.6l5.8-2.8z" fill="#c8c8c8"/>
<g fill="none" stroke="#b8b8b8"><circle cx="136.5" cy="551.65" r="3.6" stroke-width="1.2"/><path d="M135 546.65h3" stroke-width="1.3"/></g>
<path d="M118.5 563.15v5.6l5.8-2.8z" fill="#c8c8c8"/>
<g fill="none" stroke="#b8b8b8"><circle cx="136.5" cy="566.65" r="3.6" stroke-width="1.2"/><path d="M135 561.65h3" stroke-width="1.3"/></g>
<path d="M118.5 578.15v5.6l5.8-2.8z" fill="#c8c8c8"/>
<path d="M118.5 593.15v5.6l5.8-2.8z" fill="#c8c8c8"/>
<path d="M103.8 608.05h6l-3 6z" fill="#c8c8c8"/>
<text x="247" y="614.85" font-size="8.6" fill="#2e92ee">重置</text>
<text x="314" y="614.85" font-size="8.6" fill="#2e92ee">关于</text>
<path d="M334 639.85l2.9 2.7 2.9-2.7" fill="none" stroke="#c0c0c0" stroke-width="1.1"/>
<path d="M118.5 653.15v5.6l5.8-2.8z" fill="#c8c8c8"/>
<g fill="none" stroke="#b8b8b8"><circle cx="136.5" cy="656.65" r="3.6" stroke-width="1.2"/><path d="M135 651.65h3" stroke-width="1.3"/></g>
<path d="M118.5 668.15v5.6l5.8-2.8z" fill="#c8c8c8"/>
<g fill="none" stroke="#b8b8b8"><circle cx="136.5" cy="671.65" r="3.6" stroke-width="1.2"/><path d="M135 666.65h3" stroke-width="1.3"/></g>
<path d="M381 147.3l4 4M385 147.3l-4 4" stroke="#8a8a8a" stroke-width=".9"/>
<rect x="392" y="145" width="7.8" height="7.5" fill="#c6aa82"/>
<g><rect x="407.8" y="146.8" width="6.5" height="5" rx=".6" fill="#d0d0d0"/><path d="M409 147.1v-2a2 2 0 0 1 4 0" fill="none" stroke="#d0d0d0" stroke-width="1.2"/><rect x="410.4" y="148.3" width="1.3" height="2" fill="#262626"/></g>
<text x="421" y="152.24" font-size="9" fill="#c4c4c4">合成</text>
<text x="441" y="152.24" font-size="9" fill="#2e92ee">10<tspan x="451.26">周年</tspan></text>
<path d="M473.8 146.8h6.5M473.8 149.3h6.5M473.8 151.8h6.5" stroke="#b0b0b0" stroke-width="1"/>
<text x="394" y="171.24" font-size="9" fill="#2e92ee">10<tspan x="404.26">周年</tspan></text>
<clipPath id="cclip"><rect x="737" y="307" width="300" height="225"/></clipPath><g clip-path="url(#cclip)" fill="none" stroke-width="8" stroke-linecap="round"><path stroke="#568b98" d="M962 365h0M793 469h0M889 353h0M917 379h0M934 389h0M925 428h0M979 407h0M721 436h0M1043 402h0M915 426h0M1014 386h0M904 320h0M850 421h0M924 395h0M955 374h0M795 353h0"/><path stroke="#7fc597" d="M879 348h0M947 385h0M1009 402h0M966 446h0M952 370h0M874 410h0M867 360h0M1019 452h0M779 389h0M1000 427h0M974 353h0M844 504h0M859 451h0M833 497h0M830 448h0M899 397h0M941 484h0M1032 380h0M806 331h0M804 463h0M991 384h0M961 417h0M856 478h0M946 477h0M891 414h0M837 486h0M844 437h0M878 398h0M967 408h0M895 405h0M835 423h0"/><path stroke="#ff5f5e" d="M1030 377h0M870 490h0M785 359h0M1030 441h0M808 361h0M961 407h0M952 478h0M970 451h0M851 384h0M975 353h0M918 340h0M781 439h0M764 469h0M950 377h0M908 403h0M875 490h0M914 375h0M961 446h0M1021 442h0M984 448h0M968 445h0M852 454h0M782 469h0M998 380h0M947 479h0M926 502h0M970 351h0M907 340h0M1014 423h0"/><path stroke="#9ccf90" d="M735 383h0M959 401h0M817 490h0M811 429h0M1038 411h0M839 381h0M832 399h0M851 499h0M883 360h0M993 419h0M1006 446h0M895 398h0M857 459h0M875 373h0M972 370h0M908 366h0M897 475h0M777 403h0M924 456h0M861 447h0M793 471h0M998 408h0M878 371h0M729 440h0M896 460h0M993 382h0"/><path stroke="#68a896" d="M964 448h0M848 332h0M994 380h0M908 478h0M807 417h0M877 510h0M898 471h0M868 374h0M854 398h0M860 415h0M871 348h0M976 485h0M968 366h0M777 443h0M965 425h0M963 416h0M783 465h0M904 344h0M875 430h0M1021 367h0M902 495h0M971 361h0"/><path stroke="#efe375" d="M932 455h0M1001 394h0M803 365h0M997 381h0M861 420h0M826 351h0M888 352h0M791 366h0M856 365h0M938 512h0M795 477h0M804 421h0M996 357h0M1014 365h0M821 350h0M940 332h0M879 401h0M825 495h0M735 448h0M914 368h0M991 359h0M921 350h0M1029 367h0M792 485h0"/><path stroke="#c4d983" d="M820 342h0M905 323h0M988 433h0M868 427h0M847 396h0M888 424h0M942 326h0M907 379h0M839 468h0M847 428h0M779 395h0M1019 470h0M796 360h0M938 409h0M874 340h0M970 444h0M920 446h0M777 453h0M928 455h0M878 444h0M973 372h0"/><path stroke="#ff4d5e" d="M855 386h0M856 389h0M1009 468h0M919 504h0M938 482h0M846 418h0M789 372h0M799 354h0M800 363h0M919 393h0M1005 450h0M853 370h0M824 470h0M962 494h0M751 360h0M952 394h0M936 407h0"/><path stroke="#fd9468" d="M754 414h0M881 436h0M920 365h0M973 429h0M942 371h0M825 400h0M781 399h0M785 411h0M1010 475h0M856 435h0M877 332h0M832 358h0M744 409h0M965 491h0M756 363h0M869 377h0M870 443h0M970 419h0M939 451h0M1014 445h0M950 490h0M839 399h0M1012 372h0M965 487h0M926 376h0M797 400h0M920 485h0M880 346h0M1029 367h0"/><path stroke="#f6cc70" d="M856 472h0M872 345h0M894 386h0M869 382h0M919 501h0M885 392h0M879 456h0M834 401h0M847 345h0M1042 416h0M936 495h0M995 359h0M834 477h0M772 362h0M1000 467h0M956 447h0M845 415h0M846 355h0M939 446h0M969 493h0M945 485h0M840 457h0M796 477h0M760 415h0M925 433h0"/><path stroke="#46739a" d="M1030 466h0M774 443h0M899 422h0M994 367h0M935 456h0M838 394h0M972 448h0M1010 402h0M917 387h0M753 442h0M919 436h0M883 415h0M885 384h0M829 380h0M761 404h0M756 438h0M1029 408h0"/><path stroke="#ff7a66" d="M775 456h0M811 480h0M791 393h0M836 345h0M835 357h0M866 366h0M799 454h0M807 420h0M957 352h0M970 377h0M855 443h0M851 491h0M894 392h0M717 418h0M899 446h0M861 420h0M928 418h0M797 447h0M887 391h0M949 469h0M864 499h0M850 418h0M843 478h0M1017 381h0M914 339h0M969 485h0M743 415h0M922 494h0"/><path stroke="#fbb06c" d="M765 434h0M920 407h0M915 422h0M898 341h0M862 497h0M890 430h0M889 419h0M813 473h0M947 463h0M827 373h0M942 499h0M781 473h0M715 411h0M844 363h0M1003 468h0M945 353h0M815 353h0M865 419h0M776 366h0M783 450h0M995 396h0M985 353h0M997 444h0M832 396h0M851 469h0M996 430h0M857 378h0M835 448h0M922 472h0M930 461h0M1006 435h0M976 397h0M1014 388h0M743 397h0"/><path stroke="#568b98" d="M845 464h0M740 424h0M743 420h0M738 414h0M913 444h0M859 370h0M1009 455h0M875 433h0M860 496h0M935 381h0M774 473h0M1017 398h0M759 424h0M894 372h0M862 487h0M778 385h0M920 433h0M1003 407h0M922 336h0"/><path stroke="#fbb06c" d="M914 449h0M842 435h0M825 385h0M943 424h0M830 362h0M773 376h0M807 387h0M1009 461h0M887 343h0M759 405h0M969 472h0M988 456h0M770 405h0M830 428h0M974 428h0M1026 449h0M851 455h0M822 469h0M836 421h0M897 372h0M901 335h0M1006 409h0M742 456h0M886 387h0M803 473h0M983 368h0M952 471h0M800 355h0M908 483h0M936 382h0M870 383h0"/><path stroke="#9ccf90" d="M941 366h0M1017 440h0M930 410h0M845 429h0M771 416h0M831 465h0M791 491h0M957 384h0M963 401h0M1029 430h0M981 383h0M938 387h0M866 432h0M779 395h0M988 476h0M836 341h0M764 468h0M785 402h0M832 482h0M865 388h0M985 391h0M1011 453h0M932 458h0M1002 436h0"/><path stroke="#f6cc70" d="M991 343h0M807 430h0M991 392h0M747 369h0M1004 365h0M872 474h0M810 434h0M1026 428h0M767 428h0M777 380h0M858 425h0M992 387h0M850 495h0M914 343h0M1033 387h0M877 464h0M961 406h0M883 435h0M948 365h0M785 434h0M841 447h0M823 406h0M907 479h0M982 342h0M852 328h0M939 352h0M1011 397h0M807 426h0M795 475h0M854 417h0M798 430h0M797 386h0"/><path stroke="#c4d983" d="M943 335h0M869 408h0M734 390h0M756 372h0M889 350h0M889 358h0M940 426h0M829 351h0M880 448h0M883 428h0M839 468h0M902 458h0M956 375h0M890 446h0M812 346h0M1010 370h0M887 333h0M830 356h0M906 458h0M852 431h0M967 482h0M862 447h0M780 380h0M923 489h0M909 406h0M973 435h0"/><path stroke="#68a896" d="M723 402h0M920 416h0M887 405h0M933 363h0M976 463h0M748 461h0M837 488h0M911 476h0M846 497h0M952 368h0M798 471h0M826 391h0M891 400h0M959 359h0M970 384h0M768 376h0M816 342h0M769 396h0M977 420h0M911 419h0"/><path stroke="#ff5f5e" d="M954 442h0M894 468h0M756 473h0M1040 436h0M982 487h0M768 455h0M1013 394h0M923 355h0M1016 434h0M786 384h0M957 438h0M979 396h0M820 368h0M974 402h0M733 448h0M917 385h0M829 339h0M985 410h0M849 419h0M864 352h0"/><path stroke="#ff4d5e" d="M874 424h0M872 427h0M781 419h0M843 379h0M997 375h0M960 468h0M949 420h0M864 453h0M948 389h0M847 334h0M882 338h0M786 445h0M1006 385h0M922 407h0M886 454h0M888 501h0M998 412h0M1025 420h0M810 392h0M955 398h0M960 476h0"/><path stroke="#efe375" d="M980 473h0M920 453h0M930 483h0M829 406h0M1008 375h0M966 365h0M947 431h0M893 405h0M951 438h0M933 484h0M881 503h0M936 357h0M909 387h0M818 399h0M968 394h0M936 426h0M764 464h0M879 341h0M967 394h0M1015 382h0M871 381h0M847 392h0M980 383h0M1002 387h0M972 445h0"/><path stroke="#7fc597" d="M820 491h0M894 421h0M942 444h0M940 491h0M865 430h0M1036 427h0M764 366h0M929 390h0M961 379h0M908 475h0M944 482h0M893 498h0M915 368h0M779 480h0M881 447h0"/><path stroke="#ff7a66" d="M806 362h0M884 371h0M910 433h0M882 404h0M1021 378h0M834 417h0M914 463h0M1013 444h0M1007 427h0M792 362h0M837 428h0M800 417h0M895 412h0M820 490h0M781 427h0M923 478h0M886 477h0M785 352h0M949 445h0M954 391h0M960 369h0M758 433h0M1029 424h0M952 503h0M889 400h0M747 407h0M976 392h0"/><path stroke="#46739a" d="M792 421h0M926 385h0M844 385h0M885 438h0M999 458h0M958 341h0M852 449h0M956 462h0M772 396h0M935 491h0M964 404h0M840 422h0M1021 453h0M944 498h0M1016 379h0M778 435h0"/><path stroke="#fd9468" d="M806 375h0M892 367h0M1029 404h0M1029 440h0M766 375h0M859 505h0M833 437h0M959 486h0M969 385h0M950 383h0M956 452h0M948 460h0M750 430h0M964 406h0M739 379h0M809 349h0M821 349h0M769 465h0M918 399h0M754 417h0M825 379h0M973 380h0M947 439h0M993 361h0M1002 408h0M862 359h0M897 441h0M781 441h0M896 423h0M941 487h0M801 379h0M877 501h0M839 409h0M954 373h0M818 430h0M923 408h0M976 455h0M725 443h0M868 489h0M846 483h0M965 461h0M775 362h0"/><path stroke="#9ccf90" d="M783 394h0M987 341h0M822 475h0M948 436h0M748 397h0M1015 447h0M974 383h0M736 407h0M990 403h0M762 469h0M1003 400h0M996 365h0M838 393h0M1024 392h0M1029 471h0M986 407h0M893 379h0M1011 361h0M944 400h0M862 451h0M965 477h0M839 372h0M984 467h0M923 364h0M820 448h0M926 419h0M844 481h0M850 344h0M867 397h0M785 479h0M880 390h0M1013 428h0M937 491h0"/><path stroke="#fbb06c" d="M966 404h0M923 481h0M871 336h0M896 333h0M863 334h0M876 469h0M765 458h0M884 350h0M788 365h0M815 497h0M892 410h0M850 385h0M955 382h0M845 364h0M1001 398h0M865 465h0M805 445h0M973 428h0M757 417h0M1015 407h0M1020 449h0M885 483h0M767 424h0M899 380h0M1010 450h0M776 384h0M1027 393h0M915 449h0M876 337h0"/><path stroke="#efe375" d="M849 454h0M820 330h0M795 463h0M960 470h0M878 455h0M934 459h0M859 382h0M922 402h0M811 380h0M758 397h0M906 508h0M974 397h0M959 378h0M903 468h0M904 495h0M878 393h0M992 412h0M876 352h0M747 413h0M808 369h0M876 418h0M972 385h0M985 398h0M820 438h0M888 399h0"/><path stroke="#fd9468" d="M944 354h0M811 384h0M791 398h0M887 439h0M1023 388h0M921 352h0M879 365h0M898 476h0M759 424h0M794 410h0M814 445h0M997 386h0M926 365h0M824 474h0M932 374h0M949 467h0M820 412h0M878 381h0M929 454h0M998 433h0M763 392h0M914 483h0M877 478h0M873 486h0M755 375h0M959 402h0M919 465h0M912 352h0M781 369h0M894 363h0M978 414h0M882 462h0M841 358h0M890 371h0M803 469h0M782 356h0M838 412h0"/><path stroke="#7fc597" d="M772 407h0M997 486h0M833 452h0M998 359h0M732 452h0M821 492h0M1007 364h0M858 385h0M850 349h0M823 486h0M891 415h0M816 428h0M1006 467h0M740 357h0M947 451h0"/><path stroke="#f6cc70" d="M739 458h0M769 470h0M870 358h0M869 430h0M856 423h0M996 359h0M961 392h0M973 357h0M814 377h0M745 409h0M795 469h0M922 340h0M840 363h0M908 396h0M946 344h0M927 348h0M760 453h0M798 454h0M869 386h0M929 372h0M769 411h0M960 342h0M872 433h0M837 499h0M974 353h0"/><path stroke="#ff7a66" d="M852 441h0M816 444h0M1000 371h0M782 351h0M872 467h0M880 348h0M973 368h0M818 399h0M796 343h0M990 389h0M927 371h0M988 440h0M826 478h0M979 352h0M910 480h0M1028 387h0M982 360h0M885 387h0M802 389h0M781 453h0M829 459h0M894 413h0M891 436h0M856 452h0M775 360h0M823 492h0M991 390h0M1000 484h0M872 355h0M839 467h0M961 365h0M942 339h0M905 442h0M1013 457h0M899 495h0M963 409h0M1001 364h0M764 397h0"/><path stroke="#46739a" d="M899 449h0M843 388h0M1009 366h0M967 368h0M1000 455h0M974 383h0M750 413h0M939 458h0M815 399h0M789 436h0M935 477h0M781 404h0M813 427h0"/><path stroke="#68a896" d="M876 340h0M767 483h0M942 436h0M835 465h0M763 413h0M920 350h0M874 463h0M768 399h0M902 382h0M1013 421h0M905 417h0M817 390h0M1024 414h0M885 464h0M887 382h0M1041 436h0M814 419h0M833 381h0M961 394h0M917 356h0M901 356h0M994 375h0M973 389h0"/><path stroke="#c4d983" d="M735 388h0M863 457h0M947 438h0M952 369h0M946 420h0M989 374h0M797 462h0M1000 482h0M918 332h0M960 441h0M890 421h0M775 387h0M920 464h0M865 328h0M976 464h0M899 456h0M991 445h0M1004 456h0M952 456h0M857 360h0M890 381h0M1026 446h0M857 377h0M838 473h0M1013 412h0M948 430h0"/><path stroke="#ff5f5e" d="M878 419h0M839 344h0M979 444h0M916 386h0M793 453h0M831 391h0M974 472h0M869 499h0M798 388h0M888 414h0M850 462h0M975 355h0M823 455h0M954 416h0M1013 431h0M984 470h0M901 404h0M872 389h0"/><path stroke="#ff4d5e" d="M1016 463h0M960 354h0M959 368h0M959 405h0M945 340h0M928 365h0M775 397h0M781 378h0M881 399h0M794 420h0M817 418h0M831 445h0M998 436h0M902 369h0M920 401h0M908 473h0M843 427h0M927 374h0M835 452h0M915 430h0M920 433h0M821 491h0M814 455h0M864 480h0M976 451h0M792 374h0"/><path stroke="#568b98" d="M969 361h0M908 486h0M949 489h0M786 345h0M794 360h0M933 374h0M955 450h0M929 343h0M775 418h0M848 352h0"/><path stroke="#fd9468" d="M743 422h0M842 403h0M1002 416h0M858 390h0M997 411h0M842 358h0M737 384h0M814 420h0M806 405h0M839 487h0M785 349h0M985 415h0M762 467h0M910 364h0M1007 368h0M1005 452h0M920 369h0M847 473h0M872 423h0M1010 435h0M819 397h0M986 429h0M813 327h0M953 447h0M1016 429h0M1018 397h0M1013 420h0M886 460h0M917 446h0M833 379h0M802 447h0M761 361h0M876 340h0M902 330h0M911 440h0M894 334h0M816 438h0M937 371h0M988 417h0"/><path stroke="#c4d983" d="M815 389h0M734 462h0M920 360h0M843 384h0M939 468h0M987 433h0M772 376h0M753 423h0M884 415h0M947 436h0M915 337h0M778 381h0M759 445h0M808 492h0M911 482h0M975 453h0M897 445h0M797 477h0M990 425h0M814 332h0M800 414h0M875 332h0M794 469h0"/><path stroke="#ff4d5e" d="M912 379h0M987 442h0M789 459h0M1037 390h0M778 471h0M856 346h0M792 377h0M800 355h0M773 427h0M1031 400h0M981 449h0M875 393h0M847 476h0M807 370h0M948 378h0M845 422h0M826 384h0M825 398h0M972 487h0M811 425h0M939 422h0M780 436h0M784 477h0M876 424h0M837 395h0M832 364h0"/><path stroke="#f6cc70" d="M984 369h0M864 473h0M744 411h0M924 495h0M920 464h0M804 435h0M794 484h0M980 463h0M848 427h0M808 370h0M978 355h0M786 477h0M973 383h0M1015 385h0M825 395h0M822 377h0M824 456h0M953 430h0M1048 404h0M787 436h0M873 428h0M852 431h0M933 391h0M1035 450h0M898 382h0M980 415h0M890 440h0M1035 406h0M870 421h0M796 366h0M794 419h0M997 456h0"/><path stroke="#568b98" d="M868 497h0M1005 363h0M1002 438h0M1004 437h0M734 381h0M844 475h0M827 432h0M833 460h0M1034 450h0M878 428h0M872 484h0M899 475h0M931 349h0M822 375h0M953 360h0M842 331h0M788 339h0"/><path stroke="#46739a" d="M918 335h0M854 433h0M816 354h0M974 440h0M881 498h0M986 374h0M910 346h0M956 370h0M781 357h0M797 430h0M817 411h0M1020 468h0M920 478h0M1047 389h0"/><path stroke="#ff7a66" d="M1014 394h0M792 361h0M802 416h0M810 368h0M770 409h0M944 396h0M970 357h0M968 483h0M866 409h0M965 423h0M957 492h0M993 474h0M1030 397h0M899 460h0M1026 447h0M811 359h0M950 474h0M792 434h0M958 398h0M857 402h0M756 423h0M1010 389h0M899 368h0M846 511h0M933 426h0M782 379h0M815 336h0M795 362h0M942 370h0M754 413h0M987 411h0"/><path stroke="#efe375" d="M944 457h0M936 438h0M841 373h0M943 432h0M974 354h0M969 408h0M1040 420h0M897 456h0M945 386h0M930 385h0M751 439h0M987 458h0M835 368h0M825 463h0M921 487h0M758 396h0M958 440h0M773 493h0M1013 458h0"/><path stroke="#ff5f5e" d="M1005 429h0M825 331h0M1009 486h0M801 363h0M976 453h0M775 424h0M1036 419h0M972 394h0M785 481h0M738 457h0M907 396h0M926 384h0M978 363h0M980 460h0M741 378h0M781 462h0M923 487h0M746 441h0"/><path stroke="#68a896" d="M1019 453h0M1020 374h0M903 401h0M803 405h0M995 464h0M982 438h0M972 378h0M919 337h0M971 380h0M738 398h0M777 486h0M997 432h0M892 470h0M908 425h0M898 374h0M977 457h0M936 407h0M877 411h0M781 445h0M878 469h0M933 358h0M986 356h0M887 423h0M912 493h0M837 403h0M940 348h0"/><path stroke="#fbb06c" d="M839 398h0M986 378h0M880 398h0M812 415h0M796 443h0M907 466h0M900 461h0M969 478h0M913 495h0M794 365h0M854 385h0M822 338h0M950 351h0M779 474h0M992 345h0M828 479h0M843 428h0M853 429h0M848 412h0M812 467h0M882 481h0M763 368h0M736 390h0M853 436h0M981 453h0M1048 424h0M966 465h0"/><path stroke="#9ccf90" d="M943 452h0M911 350h0M819 352h0M845 401h0M867 437h0M842 368h0M1032 378h0M828 336h0M969 411h0M836 434h0M1000 349h0M953 445h0M970 467h0M866 384h0M781 450h0M918 378h0"/><path stroke="#7fc597" d="M894 401h0M894 339h0M914 420h0M798 395h0M915 477h0M889 379h0M920 434h0M821 489h0M894 435h0M969 384h0M972 385h0M897 476h0M911 412h0M1003 411h0M821 440h0M796 404h0M860 361h0M957 406h0M969 415h0M829 438h0M838 337h0M855 475h0M776 424h0M952 416h0M995 463h0M876 501h0M970 425h0M792 481h0M955 382h0M865 456h0"/><path stroke="#ff5f5e" d="M783 343h0M946 343h0M771 446h0M1004 445h0M943 429h0M911 338h0M817 449h0M946 427h0M1006 470h0M998 371h0M750 391h0M965 465h0M911 352h0M999 415h0M1008 403h0M958 476h0M886 389h0M814 338h0M857 448h0M885 412h0M977 381h0M934 398h0M823 344h0"/><path stroke="#f6cc70" d="M1026 448h0M891 462h0M1015 426h0M900 416h0M825 379h0M766 452h0M1026 390h0M892 466h0M839 411h0M739 421h0M791 482h0M893 436h0M1001 382h0M957 352h0M944 420h0M941 505h0M815 487h0M969 434h0M885 332h0M980 406h0M836 380h0M835 415h0M979 374h0M940 385h0M943 482h0"/><path stroke="#46739a" d="M892 364h0M739 411h0M883 494h0M982 483h0M1020 418h0M904 463h0M891 433h0M955 351h0M853 362h0M990 415h0M793 486h0M881 356h0M897 413h0M861 396h0M871 353h0M892 482h0M763 425h0M849 345h0"/><path stroke="#fd9468" d="M831 352h0M904 345h0M798 475h0M845 401h0M895 370h0M751 456h0M954 401h0M858 341h0M882 422h0M903 385h0M980 442h0M912 423h0M915 467h0M956 333h0M720 412h0M811 486h0M989 347h0M834 421h0M918 438h0M739 425h0M931 490h0M934 459h0M715 414h0M896 358h0M843 432h0M825 449h0M784 449h0M804 454h0M991 391h0M955 389h0M998 398h0M877 487h0"/><path stroke="#efe375" d="M747 427h0M928 450h0M917 384h0M758 431h0M781 413h0M972 435h0M822 412h0M775 410h0M776 419h0M919 434h0M839 498h0M873 466h0M878 338h0M803 355h0M780 399h0M959 348h0M997 414h0M770 412h0M932 470h0M986 491h0M897 373h0M959 421h0M784 458h0M980 470h0M882 350h0M982 405h0M771 471h0"/><path stroke="#c4d983" d="M934 419h0M869 489h0M793 398h0M905 487h0M909 464h0M785 362h0M779 397h0M924 334h0M868 338h0M982 480h0M755 465h0M994 449h0M928 358h0M833 477h0M896 478h0M867 447h0M931 397h0M1016 374h0M889 426h0M1020 391h0"/><path stroke="#568b98" d="M979 367h0M1039 388h0M853 462h0M945 402h0M853 437h0M730 427h0M745 379h0M988 352h0M844 345h0M863 423h0M772 442h0M898 377h0M744 430h0M842 456h0M993 390h0M993 391h0M811 414h0M736 388h0"/><path stroke="#68a896" d="M1024 477h0M937 404h0M1001 402h0M916 498h0M959 442h0M988 438h0M825 486h0M853 458h0M989 433h0M889 492h0M739 432h0M897 422h0M841 338h0M896 381h0M999 379h0M918 457h0M939 435h0M976 401h0M836 345h0"/><path stroke="#9ccf90" d="M823 341h0M857 463h0M1023 424h0M830 464h0M949 415h0M928 395h0M1003 378h0M847 357h0M968 406h0M906 337h0M882 400h0M894 476h0M981 402h0M981 437h0M799 431h0M953 454h0M911 482h0M972 464h0M832 433h0M920 406h0M873 344h0M945 334h0"/><path stroke="#ff7a66" d="M940 432h0M884 379h0M949 462h0M950 421h0M766 459h0M1021 431h0M802 422h0M856 396h0M811 402h0M839 447h0M841 439h0M759 450h0M767 381h0M1027 394h0M1041 405h0M980 474h0M937 361h0M921 365h0M977 367h0M778 365h0M924 478h0M921 501h0M937 458h0M884 472h0M893 355h0M838 460h0M854 381h0M951 364h0M763 385h0M875 336h0M939 382h0M887 491h0M1016 367h0M888 466h0M835 466h0M962 473h0M943 488h0M856 388h0M810 474h0M1030 391h0M815 363h0M757 397h0M943 455h0M1015 402h0M1050 440h0"/><path stroke="#fbb06c" d="M920 331h0M883 427h0M795 357h0M879 340h0M785 446h0M800 419h0M750 374h0M812 462h0M997 434h0M817 426h0M956 343h0M784 412h0M731 412h0M841 431h0M889 471h0M842 462h0M1034 373h0M928 468h0M747 441h0M835 357h0M875 493h0M1014 387h0M1021 447h0M1018 428h0M798 423h0M805 434h0M812 380h0M972 469h0M1008 461h0M909 468h0M840 458h0M987 351h0M1006 444h0M942 352h0"/><path stroke="#7fc597" d="M894 370h0M946 325h0M752 365h0M803 453h0M958 419h0M847 480h0M875 497h0M931 379h0M952 395h0M950 454h0M995 456h0M744 420h0M954 396h0M779 446h0M746 371h0M847 494h0M804 372h0M882 418h0"/><path stroke="#ff4d5e" d="M882 496h0M933 403h0M1002 407h0M899 453h0M761 378h0M816 385h0M884 373h0M855 385h0M874 365h0M894 345h0M793 350h0M946 419h0M984 461h0M767 426h0M979 387h0M886 395h0M974 450h0"/><path stroke="#ff7a66" d="M747 454h0M851 429h0M829 442h0M964 430h0M761 372h0M924 390h0M1011 431h0M781 448h0M801 469h0M963 397h0M892 407h0M804 488h0M983 377h0M824 445h0M1017 422h0M789 375h0M784 446h0M927 426h0M1021 431h0M906 395h0M869 443h0M866 365h0M805 394h0M927 474h0M859 456h0M977 438h0M888 490h0M921 337h0M823 485h0M880 349h0M942 439h0M1036 438h0M824 444h0M926 365h0"/><path stroke="#f6cc70" d="M865 463h0M822 458h0M845 383h0M991 455h0M853 334h0M807 355h0M973 368h0M979 427h0M861 359h0M865 498h0M915 459h0M918 400h0M974 388h0M914 373h0M1012 428h0M855 432h0M981 389h0M935 408h0M948 462h0M855 356h0M893 386h0M836 464h0M782 461h0M924 394h0M823 346h0M801 472h0"/><path stroke="#46739a" d="M914 443h0M883 503h0M979 416h0M879 355h0M836 373h0M863 329h0M991 403h0M960 483h0M840 368h0M961 409h0M844 355h0M989 454h0"/><path stroke="#68a896" d="M878 489h0M1018 407h0M789 458h0M835 349h0M827 458h0M970 414h0M842 409h0M793 463h0M967 365h0M905 437h0M991 359h0M977 455h0M859 402h0M853 436h0M826 449h0M911 334h0M843 409h0M843 453h0M912 367h0M753 465h0M801 442h0"/><path stroke="#fbb06c" d="M898 490h0M920 482h0M855 493h0M923 409h0M958 338h0M1038 448h0M902 449h0M921 341h0M786 453h0M976 441h0M794 374h0M894 438h0M954 392h0M794 413h0M876 497h0M1005 447h0M803 431h0M893 406h0M812 368h0M918 362h0M899 347h0M804 400h0"/><path stroke="#9ccf90" d="M904 456h0M952 437h0M851 391h0M855 462h0M1033 378h0M944 375h0M1042 454h0M835 379h0M804 437h0M1013 400h0M832 451h0M843 355h0M776 458h0M776 428h0M797 447h0M887 332h0"/><path stroke="#fd9468" d="M1013 473h0M924 335h0M855 342h0M860 470h0M845 379h0M845 447h0M874 388h0M859 486h0M885 411h0M922 361h0M973 468h0M970 427h0M1024 397h0M990 409h0M913 429h0M795 445h0M830 435h0M847 499h0M904 398h0M896 419h0M988 394h0M1002 355h0M897 417h0M976 424h0M1006 455h0M928 431h0M970 362h0M735 422h0M981 446h0M865 490h0M973 431h0M950 384h0M923 424h0"/><path stroke="#ff4d5e" d="M936 427h0M796 423h0M1014 447h0M883 393h0M809 406h0M909 466h0M986 455h0M960 431h0M797 351h0M804 373h0M861 456h0M884 452h0M888 470h0M789 469h0M993 468h0M922 431h0M958 418h0M982 392h0M994 401h0M823 434h0M906 385h0M848 453h0M817 370h0M919 339h0"/><path stroke="#efe375" d="M896 491h0M810 349h0M915 444h0M768 454h0M890 372h0M996 363h0M746 449h0M837 462h0M928 475h0M862 344h0M859 426h0M770 460h0M862 406h0M970 385h0M906 366h0M890 378h0M788 383h0M783 413h0M843 407h0M806 419h0M981 379h0M933 467h0M766 414h0M849 450h0M1020 371h0M766 474h0M970 483h0M865 456h0"/><path stroke="#c4d983" d="M765 409h0M805 386h0M844 430h0M877 433h0M937 439h0M828 350h0M756 430h0M762 478h0M736 462h0M748 421h0M801 475h0M854 440h0M908 375h0M951 405h0M762 439h0M995 396h0M997 357h0M838 446h0M954 483h0M907 442h0M855 339h0M1001 468h0M781 452h0"/><path stroke="#ff5f5e" d="M892 402h0M807 406h0M983 418h0M802 380h0M908 426h0M807 346h0M1027 388h0M732 373h0M965 345h0M841 460h0M874 463h0M855 339h0M838 430h0M918 375h0M906 450h0M1016 380h0M825 449h0M830 349h0M849 500h0M1048 423h0M958 404h0M809 345h0M952 400h0M814 406h0M977 456h0M745 397h0M959 398h0M988 399h0M918 495h0M885 369h0M822 453h0M980 391h0M972 487h0"/><path stroke="#568b98" d="M855 503h0M960 431h0M951 355h0M815 362h0M753 437h0M907 346h0M771 363h0M805 387h0M794 351h0M971 408h0M962 392h0M789 480h0M737 457h0M805 420h0M971 402h0M873 484h0M978 483h0M811 452h0M963 490h0M982 367h0M956 495h0"/><path stroke="#7fc597" d="M932 362h0M995 459h0M849 363h0M928 385h0M853 498h0M854 341h0M741 437h0M860 480h0M799 443h0M888 485h0M751 445h0M1043 415h0M847 321h0M980 472h0M948 437h0M787 482h0M848 358h0M953 380h0M822 488h0M924 366h0M862 435h0M841 356h0M986 429h0M794 389h0M881 450h0M938 428h0"/><path stroke="#fbb06c" d="M1017 443h0M931 402h0M945 454h0M979 463h0M870 357h0M887 411h0M736 438h0M915 442h0M872 354h0M916 366h0M843 501h0M903 422h0M872 386h0M1022 360h0M946 405h0M835 358h0M963 426h0M948 424h0M758 367h0M790 373h0M881 427h0M917 409h0M811 375h0M931 374h0M920 442h0M1046 444h0M974 426h0M975 390h0M854 469h0"/><path stroke="#ff5f5e" d="M991 384h0M847 448h0M1035 403h0M1024 415h0M823 338h0M999 483h0M864 421h0M954 428h0M1024 405h0M950 393h0M965 399h0M835 421h0M796 360h0M914 483h0M1004 442h0M989 435h0M819 351h0M946 337h0M973 342h0M882 496h0M794 434h0M758 402h0M1028 431h0"/><path stroke="#efe375" d="M921 352h0M1023 390h0M937 346h0M1013 378h0M810 344h0M782 399h0M890 507h0M985 385h0M752 479h0M872 408h0M899 462h0M842 426h0M830 467h0M795 488h0M769 431h0M792 480h0M875 427h0M764 394h0M791 492h0M918 377h0M894 402h0M896 330h0M971 471h0M850 417h0M859 489h0M1029 412h0M800 448h0M1008 453h0M771 450h0M785 357h0M821 360h0M878 449h0M1014 472h0M999 390h0"/><path stroke="#68a896" d="M883 417h0M992 461h0M723 411h0M985 414h0M927 429h0M927 462h0M904 393h0M875 435h0M930 441h0M932 421h0M902 476h0M864 365h0M954 396h0M788 392h0M768 392h0M924 392h0M945 467h0"/><path stroke="#568b98" d="M935 374h0M827 419h0M979 477h0M770 378h0M898 358h0M1036 439h0M997 379h0M940 443h0M883 407h0M977 494h0M1001 432h0M769 423h0M959 372h0M811 391h0M873 422h0M957 435h0M869 461h0M887 484h0M810 368h0"/><path stroke="#c4d983" d="M1011 401h0M996 436h0M849 460h0M856 346h0M813 396h0M1016 452h0M745 412h0M947 450h0M780 474h0M858 483h0M953 410h0M843 486h0M782 481h0M984 399h0M879 454h0M944 376h0"/><path stroke="#9ccf90" d="M916 490h0M900 354h0M766 462h0M969 427h0M819 374h0M847 457h0M809 376h0M907 345h0M773 416h0M937 365h0M953 405h0M820 413h0M982 407h0M916 387h0M980 346h0M754 353h0M770 428h0M773 458h0M813 458h0M854 434h0M968 348h0"/><path stroke="#ff4d5e" d="M1001 407h0M916 415h0M999 394h0M915 462h0M1018 363h0M1039 387h0M1000 361h0M766 453h0M891 504h0M877 442h0M970 395h0M828 449h0M823 351h0M993 374h0M872 400h0M931 380h0M938 340h0M904 438h0"/><path stroke="#fd9468" d="M1012 367h0M929 347h0M852 494h0M745 428h0M892 510h0M922 341h0M888 346h0M865 489h0M827 353h0M760 436h0M768 361h0M900 415h0M808 399h0M800 409h0M979 372h0M990 342h0M901 490h0M830 480h0M960 426h0M817 486h0M816 382h0M857 405h0M990 428h0M980 379h0M758 371h0M929 363h0M868 451h0M870 339h0M1036 436h0M765 444h0M945 400h0M882 409h0M1002 423h0M831 406h0M816 346h0M960 391h0M1023 361h0M963 464h0M1010 440h0M807 354h0"/><path stroke="#ff7a66" d="M828 460h0M856 484h0M774 367h0M855 383h0M874 401h0M785 484h0M755 365h0M803 433h0M838 382h0M927 353h0M946 492h0M790 436h0M919 376h0M880 384h0M874 366h0M900 401h0M920 439h0M864 391h0M944 424h0M848 462h0M1013 463h0M745 425h0M1029 414h0M951 446h0M951 374h0M933 472h0M740 416h0M995 476h0M939 355h0M839 484h0M850 422h0M909 459h0"/><path stroke="#46739a" d="M749 425h0M849 405h0M961 416h0M824 361h0M948 346h0M864 398h0M943 442h0M952 342h0M805 454h0M908 350h0M951 333h0M891 485h0M883 466h0M822 483h0M856 427h0"/><path stroke="#f6cc70" d="M808 430h0M895 358h0M851 469h0M773 412h0M900 370h0M959 447h0M796 390h0M964 480h0M774 418h0M903 481h0M760 416h0M756 446h0M744 387h0M1000 397h0M874 406h0M922 507h0M908 467h0M782 358h0M931 450h0M743 391h0M969 402h0M972 345h0M989 459h0M937 355h0M1037 442h0M927 428h0M794 461h0"/><path stroke="#7fc597" d="M896 367h0M906 420h0M925 368h0M762 374h0M960 393h0M788 367h0M859 378h0M836 372h0M937 439h0M767 400h0M860 434h0M794 465h0M817 456h0M896 457h0M898 377h0M964 480h0M1020 391h0M795 466h0M961 354h0M819 337h0M849 420h0M995 379h0M772 472h0M826 443h0M952 361h0M961 405h0M956 380h0"/><path stroke="#fbb06c" d="M1009 382h0M957 340h0M991 359h0M1002 352h0M743 448h0M992 447h0M962 387h0M907 449h0M946 439h0M922 357h0M787 356h0M793 345h0M996 426h0M927 454h0M904 460h0M728 448h0M939 485h0M781 475h0M893 492h0M803 388h0M810 404h0M978 436h0M763 347h0M990 492h0M904 458h0M958 440h0M766 480h0M1004 412h0M917 399h0M837 418h0M981 375h0"/><path stroke="#9ccf90" d="M788 492h0M789 361h0M919 419h0M826 411h0M842 452h0M852 387h0M876 483h0M744 407h0M874 444h0M806 358h0M827 399h0M986 468h0M786 384h0M880 426h0M745 413h0M993 408h0M895 446h0M953 448h0M790 373h0M922 430h0M772 378h0M796 438h0M784 469h0M965 350h0M1027 427h0M848 362h0"/><path stroke="#c4d983" d="M999 422h0M781 388h0M931 386h0M762 416h0M893 433h0M827 441h0M804 343h0M809 436h0M957 441h0M859 416h0M800 385h0M902 329h0M960 357h0M818 336h0M984 480h0M833 419h0M977 470h0M994 442h0M951 501h0M860 450h0M778 444h0M928 347h0M886 445h0"/><path stroke="#ff4d5e" d="M780 406h0M992 339h0M883 349h0M866 413h0M969 422h0M1020 458h0M938 397h0M782 466h0M857 348h0M870 364h0M803 363h0M938 421h0M795 474h0M866 339h0M860 443h0M921 335h0M967 493h0M822 481h0M902 367h0M973 430h0M879 385h0M852 399h0M862 337h0M826 376h0M939 474h0M786 477h0M812 486h0M854 481h0M785 390h0"/><path stroke="#fd9468" d="M897 380h0M933 494h0M1000 376h0M964 402h0M852 419h0M858 334h0M1028 447h0M790 400h0M960 405h0M1029 414h0M1025 414h0M886 459h0M886 348h0M876 493h0M1040 381h0M969 402h0M971 343h0M875 462h0M889 489h0M843 429h0M991 474h0M740 405h0M894 473h0M930 370h0M858 384h0M823 419h0M949 429h0M757 380h0M920 391h0"/><path stroke="#f6cc70" d="M959 365h0M755 378h0M770 369h0M912 361h0M915 398h0M1018 410h0M781 410h0M900 369h0M854 463h0M938 459h0M771 392h0M971 488h0M915 343h0M1028 425h0M818 473h0M841 462h0M957 473h0M879 367h0M855 406h0M993 447h0M720 400h0M768 356h0M983 403h0M809 430h0M911 380h0M925 362h0M860 338h0M1023 380h0M931 359h0M828 375h0"/><path stroke="#68a896" d="M883 462h0M729 453h0M773 441h0M941 512h0M951 392h0M742 459h0M782 447h0M849 326h0M946 476h0M849 474h0M805 355h0M926 410h0M822 340h0M886 374h0M829 489h0M1009 459h0M1035 407h0M1010 369h0M839 404h0M818 485h0M940 419h0M1020 390h0M851 502h0M829 485h0M743 458h0"/><path stroke="#568b98" d="M962 403h0M896 366h0M1048 392h0M981 476h0M890 503h0M898 360h0M944 458h0M890 396h0M866 473h0M981 383h0M763 411h0M886 379h0M866 486h0M863 426h0M960 345h0M781 479h0"/><path stroke="#7fc597" d="M783 385h0M759 428h0M821 361h0M841 440h0M765 362h0M1009 480h0M830 380h0M754 398h0M950 480h0M813 472h0M784 382h0M986 440h0M816 354h0M852 513h0M936 428h0M793 352h0M915 349h0M894 360h0M964 483h0M804 352h0M896 492h0M829 355h0M835 494h0"/><path stroke="#ff7a66" d="M1000 463h0M906 464h0M936 474h0M864 438h0M903 444h0M746 434h0M824 377h0M966 399h0M843 336h0M932 484h0M768 451h0M827 342h0M962 349h0M750 381h0M897 396h0M991 449h0M909 495h0M853 352h0M916 487h0M881 449h0M891 407h0M791 354h0M898 442h0"/><path stroke="#efe375" d="M811 434h0M970 476h0M764 458h0M1032 406h0M785 461h0M976 381h0M769 472h0M812 358h0M981 389h0M1000 460h0M769 437h0M901 407h0M971 417h0M888 373h0M954 379h0M745 408h0M782 378h0M860 365h0M967 355h0M790 386h0M764 389h0M850 335h0M905 482h0M943 383h0M976 465h0M882 412h0M918 406h0M872 360h0M988 424h0M889 501h0"/><path stroke="#46739a" d="M841 503h0M774 409h0M876 377h0M951 401h0M779 454h0M845 497h0M887 350h0M959 354h0M834 466h0M985 402h0M974 369h0M858 337h0M838 499h0M919 423h0M869 396h0M946 376h0M775 426h0"/><path stroke="#ff5f5e" d="M820 332h0M810 342h0M926 354h0M851 443h0M768 426h0M913 404h0M891 425h0M999 399h0M969 432h0M829 491h0M996 395h0M993 372h0M914 343h0M784 350h0M998 435h0M855 429h0"/><path stroke="#fbb06c" d="M955 474h0M861 491h0M847 341h0M880 382h0M906 335h0M798 428h0M910 361h0M940 342h0M887 417h0M811 382h0M775 422h0M863 383h0M1036 428h0M772 386h0M887 366h0M779 411h0M831 487h0M1005 466h0M945 391h0M897 449h0M904 374h0M851 483h0M818 366h0M1018 360h0M782 368h0M777 482h0"/><path stroke="#ff7a66" d="M967 367h0M993 362h0M955 357h0M1034 407h0M772 434h0M798 408h0M908 415h0M965 408h0M821 489h0M845 346h0M1000 395h0M903 336h0M972 401h0M769 357h0M838 449h0M906 448h0M855 431h0M905 474h0M742 367h0M903 473h0M899 470h0M940 351h0M940 397h0M958 407h0M815 407h0M779 476h0M888 421h0M871 362h0M886 463h0M941 393h0M829 374h0M816 339h0M951 370h0M872 373h0M904 402h0M816 402h0M806 465h0M916 349h0M874 395h0"/><path stroke="#7fc597" d="M1044 400h0M945 368h0M948 419h0M758 445h0M955 447h0M942 498h0M816 339h0M782 474h0M898 408h0M847 373h0M809 438h0M854 374h0M785 412h0M798 392h0M797 410h0M940 487h0M892 330h0M866 440h0M897 470h0M759 464h0M811 348h0M903 431h0M978 453h0"/><path stroke="#fd9468" d="M801 399h0M968 444h0M984 426h0M965 450h0M768 392h0M901 357h0M777 452h0M838 378h0M880 345h0M952 486h0M894 343h0M998 480h0M824 406h0M943 416h0M965 402h0M795 358h0M1036 430h0M986 477h0M869 377h0M777 417h0M860 480h0M885 362h0"/><path stroke="#68a896" d="M947 382h0M897 507h0M811 464h0M881 411h0M801 448h0M779 358h0M983 387h0M993 461h0M822 346h0M921 386h0M819 347h0M907 378h0M735 378h0M825 495h0M825 417h0M897 371h0M795 466h0M1007 396h0M924 357h0M760 434h0"/><path stroke="#f6cc70" d="M820 343h0M909 368h0M940 454h0M827 365h0M978 370h0M815 397h0M740 452h0M852 483h0M1004 407h0M873 402h0M761 470h0M976 482h0M917 404h0M937 478h0M867 486h0M965 486h0M923 456h0M764 416h0M964 443h0M746 376h0M824 465h0M791 423h0M893 353h0M929 499h0M992 397h0M972 380h0M940 429h0M907 395h0M896 326h0M803 394h0M811 480h0M829 415h0M960 429h0M898 441h0M843 456h0M996 430h0"/><path stroke="#efe375" d="M893 413h0M887 333h0M1040 404h0M818 388h0M921 393h0M882 491h0M989 429h0M855 437h0M880 475h0M802 468h0M813 371h0M1015 420h0M943 405h0M941 415h0M784 408h0M885 466h0M921 377h0M885 456h0M797 346h0M819 455h0M895 337h0M915 459h0M988 436h0M854 389h0M1011 466h0"/><path stroke="#ff4d5e" d="M908 445h0M821 356h0M913 399h0M814 402h0M883 432h0M913 364h0M981 486h0M1019 405h0M834 395h0M949 449h0M936 489h0M904 400h0M983 461h0M873 372h0M881 391h0M1002 365h0M910 473h0M836 337h0M983 455h0M807 459h0M931 421h0M829 455h0M922 482h0M848 355h0M894 387h0M814 414h0M812 392h0M840 474h0M827 468h0M1003 486h0M954 455h0M909 433h0M1007 472h0"/><path stroke="#ff5f5e" d="M861 333h0M1010 452h0M1019 382h0M784 449h0M1017 428h0M755 435h0M784 446h0M992 391h0M888 329h0M996 374h0M774 422h0M928 371h0M856 473h0M1014 415h0M812 470h0M917 356h0M891 495h0M1000 424h0M1006 412h0M901 328h0"/><path stroke="#c4d983" d="M942 416h0M996 434h0M917 342h0M816 355h0M1038 435h0M915 341h0M891 336h0M737 387h0M861 351h0M819 449h0M786 467h0M997 402h0M998 447h0M1026 458h0M988 437h0M876 366h0M824 390h0M993 418h0M829 389h0M996 465h0M811 416h0M817 458h0"/><path stroke="#568b98" d="M844 370h0M812 410h0M1018 457h0M825 368h0M1004 436h0M974 485h0M855 477h0M993 418h0M1010 375h0M780 419h0M830 471h0M946 500h0"/><path stroke="#9ccf90" d="M807 457h0M765 362h0M860 403h0M905 488h0M965 360h0M813 381h0M834 345h0M908 392h0M852 358h0M835 403h0M832 415h0M874 443h0M920 357h0M908 497h0M796 424h0M1002 451h0M992 455h0M896 485h0M816 347h0M840 399h0M922 464h0M776 356h0M799 422h0M928 346h0M937 448h0M949 446h0"/><path stroke="#46739a" d="M999 392h0M851 437h0M912 442h0M736 408h0M777 441h0M759 403h0M986 481h0M802 395h0M865 456h0M868 385h0M990 438h0M1034 447h0M874 439h0M899 466h0"/><path stroke="#46739a" d="M809 465h0M896 364h0M774 417h0M779 446h0M902 422h0M751 417h0M929 417h0M964 460h0M918 438h0M982 489h0M923 362h0M983 411h0M850 382h0M903 394h0M922 388h0"/><path stroke="#9ccf90" d="M801 388h0M814 423h0M797 460h0M1047 381h0M909 403h0M884 493h0M866 439h0M814 394h0M831 499h0M759 415h0M836 411h0M964 334h0M767 355h0M987 384h0M836 356h0M985 486h0M977 471h0M927 362h0M843 418h0M993 426h0M911 370h0M912 449h0M996 356h0"/><path stroke="#efe375" d="M957 360h0M912 502h0M821 420h0M915 456h0M1010 463h0M986 442h0M862 467h0M801 350h0M777 462h0M935 393h0M864 450h0M833 364h0M932 425h0M899 490h0M1005 393h0M866 421h0M898 386h0M981 387h0M955 370h0M792 447h0M804 421h0M979 445h0M881 452h0M761 480h0M806 395h0M916 436h0M997 406h0M745 422h0M1019 464h0M883 421h0M1025 456h0M865 375h0M842 485h0M879 488h0M920 497h0M810 380h0M935 469h0M833 464h0M843 412h0"/><path stroke="#f6cc70" d="M756 368h0M964 412h0M857 351h0M739 440h0M1002 356h0M742 426h0M950 454h0M909 423h0M932 475h0M954 430h0M929 367h0M898 369h0M839 430h0M874 364h0M978 462h0M830 340h0M825 337h0M754 469h0M748 465h0M981 346h0M793 441h0M1052 415h0M941 492h0"/><path stroke="#fbb06c" d="M993 387h0M927 462h0M1028 395h0M978 361h0M927 389h0M985 365h0M907 425h0M811 362h0M831 444h0M830 375h0M836 443h0M1003 385h0M886 430h0M929 331h0M765 375h0M753 373h0M989 471h0M1007 421h0M854 369h0M782 375h0M844 372h0M870 394h0M810 439h0M754 381h0M959 449h0M934 335h0M1004 439h0M841 354h0M937 412h0"/><path stroke="#ff7a66" d="M732 402h0M818 364h0M818 357h0M800 417h0M895 486h0M863 490h0M782 442h0M972 395h0M901 356h0M991 368h0M849 456h0M844 466h0M886 348h0M823 357h0M879 393h0M884 336h0M793 438h0M767 421h0M853 506h0M963 381h0M887 504h0M813 400h0M908 359h0M886 336h0M864 483h0M936 364h0M871 467h0M876 334h0M875 459h0M964 400h0M866 383h0M1027 371h0M924 330h0M831 426h0M865 354h0"/><path stroke="#7fc597" d="M776 440h0M848 387h0M930 478h0M866 483h0M902 338h0M784 416h0M1049 409h0M958 347h0M966 432h0M941 376h0M873 387h0M990 478h0M807 437h0M867 432h0M919 406h0M984 402h0M785 415h0M904 370h0M884 373h0M1012 410h0M794 378h0"/><path stroke="#c4d983" d="M840 482h0M804 464h0M1016 371h0M869 333h0M944 398h0M826 482h0M901 379h0M737 458h0M968 397h0M987 473h0M1008 379h0M959 478h0M913 345h0M889 363h0M975 438h0M907 324h0M794 418h0M973 404h0M941 454h0M829 497h0M894 479h0M807 376h0M1004 433h0M844 456h0M809 359h0"/><path stroke="#ff5f5e" d="M906 448h0M949 345h0M869 416h0M949 466h0M937 428h0M853 384h0M882 361h0M966 379h0M764 413h0M846 429h0M772 447h0M864 455h0M785 408h0M812 460h0M776 433h0M861 353h0M957 480h0M964 439h0M988 435h0M876 436h0M1048 448h0M1022 384h0M957 347h0M879 398h0M1024 387h0"/><path stroke="#fd9468" d="M946 375h0M1031 382h0M1003 470h0M840 457h0M958 420h0M988 415h0M956 489h0M1019 433h0M811 478h0M941 333h0M852 357h0M950 430h0M833 384h0M874 348h0M932 455h0M927 463h0M887 484h0M898 353h0M1032 422h0M988 391h0M999 408h0M957 456h0M756 447h0M741 446h0M884 379h0M917 426h0M948 358h0M999 462h0M899 366h0M953 488h0M900 498h0"/><path stroke="#ff4d5e" d="M921 394h0M782 477h0M844 341h0M1023 435h0M913 379h0M847 446h0M870 441h0M910 394h0M950 481h0M867 333h0M807 385h0M974 464h0M741 388h0"/><path stroke="#68a896" d="M935 406h0M1015 373h0M922 462h0M805 362h0M835 407h0M924 387h0M987 370h0M879 396h0M763 459h0M1018 446h0M890 417h0M859 368h0M796 417h0M955 496h0M846 402h0M799 429h0M763 364h0M849 493h0M955 466h0M951 389h0"/><path stroke="#568b98" d="M967 366h0M789 451h0M898 341h0M876 441h0M1013 375h0M812 432h0M993 466h0M869 442h0M960 477h0M822 429h0M797 461h0M804 485h0M932 415h0M972 360h0M1018 424h0M800 350h0M1029 434h0M802 424h0M893 497h0"/><path stroke="#46739a" d="M876 348h0M1011 436h0M824 362h0M1007 377h0M929 383h0M1019 388h0M863 335h0M753 421h0M821 395h0M793 363h0M989 476h0M846 417h0M772 354h0M828 423h0M810 455h0M899 376h0M943 376h0M884 370h0"/><path stroke="#68a896" d="M876 356h0M874 383h0M809 395h0M842 378h0M965 478h0M775 413h0M817 368h0M792 426h0M972 359h0M996 421h0M865 375h0M778 455h0M925 365h0M956 418h0M817 474h0M884 397h0M993 468h0"/><path stroke="#ff5f5e" d="M785 347h0M828 383h0M824 480h0M893 502h0M843 379h0M814 377h0M820 426h0M910 400h0M820 377h0M824 480h0M983 462h0M855 373h0M866 476h0M832 401h0M945 362h0M996 426h0M790 492h0M930 414h0M1013 450h0M903 469h0"/><path stroke="#fd9468" d="M888 349h0M940 456h0M752 447h0M888 507h0M971 406h0M1008 378h0M913 407h0M814 370h0M879 353h0M919 430h0M884 471h0M836 342h0M995 472h0M974 393h0M953 476h0M873 395h0M877 442h0M874 444h0M801 449h0M781 406h0M888 446h0M776 449h0M762 443h0M994 465h0M930 444h0M830 436h0M992 443h0M972 470h0M1016 347h0"/><path stroke="#c4d983" d="M929 423h0M787 423h0M988 424h0M953 471h0M979 399h0M748 396h0M975 428h0M848 341h0M870 348h0M934 397h0M757 433h0M963 462h0M883 358h0M928 351h0M867 469h0M817 380h0M969 433h0M776 384h0M939 494h0M945 439h0M919 344h0M942 344h0M807 461h0M937 361h0M932 456h0M904 440h0M950 332h0M744 418h0M992 412h0M769 407h0M951 375h0"/><path stroke="#568b98" d="M957 477h0M968 436h0M912 429h0M883 479h0M838 413h0M858 374h0M810 351h0M923 485h0M997 419h0M918 342h0M817 348h0M748 384h0M810 357h0M842 399h0M748 419h0"/><path stroke="#efe375" d="M996 364h0M906 338h0M947 488h0M855 432h0M958 436h0M752 380h0M820 370h0M1005 458h0M914 497h0M998 353h0M837 409h0M949 358h0M762 440h0M941 390h0M823 351h0M818 466h0M897 464h0M941 414h0M859 391h0M889 442h0M950 370h0M841 415h0M954 445h0M959 492h0M886 396h0M717 393h0M867 344h0M923 411h0"/><path stroke="#f6cc70" d="M853 398h0M773 411h0M879 382h0M989 456h0M743 416h0M939 505h0M1002 398h0M809 412h0M920 497h0M761 460h0M818 473h0M843 459h0M885 441h0M954 408h0M856 477h0M971 427h0M833 341h0M982 446h0M804 447h0M779 398h0M1014 436h0M851 437h0M937 342h0M978 478h0M978 419h0"/><path stroke="#7fc597" d="M864 383h0M997 372h0M791 382h0M824 461h0M810 412h0M993 372h0M912 467h0M857 499h0M897 336h0M1010 458h0M1006 403h0M863 494h0M933 322h0M862 356h0M924 329h0M760 375h0M987 406h0M819 469h0M748 370h0"/><path stroke="#ff4d5e" d="M728 382h0M920 402h0M761 427h0M879 358h0M768 470h0M902 481h0M819 460h0M960 344h0M899 382h0M747 412h0M792 476h0M888 453h0M794 492h0M741 453h0M839 328h0M982 471h0M770 453h0M774 466h0M920 439h0"/><path stroke="#ff7a66" d="M951 345h0M918 345h0M1026 379h0M737 435h0M970 471h0M891 468h0M1002 432h0M740 375h0M775 431h0M872 345h0M860 450h0M875 372h0M923 347h0M997 423h0M942 454h0M741 412h0M786 467h0M874 408h0M957 404h0M887 492h0M803 451h0M913 380h0M887 385h0M935 407h0M821 440h0M810 422h0M1003 393h0M806 398h0M947 501h0M931 496h0M907 442h0M976 399h0M784 400h0M906 344h0M907 491h0M909 369h0M886 470h0M964 356h0M849 459h0M895 371h0M950 417h0M925 422h0M866 449h0M819 394h0M740 394h0M822 477h0M783 398h0"/><path stroke="#9ccf90" d="M868 378h0M812 475h0M1010 415h0M914 333h0M861 390h0M993 403h0M735 420h0M930 367h0M748 372h0M975 370h0M801 434h0M1038 389h0M900 477h0M946 448h0M1042 390h0M1019 407h0M784 359h0M810 398h0M1018 410h0M949 405h0"/><path stroke="#fbb06c" d="M1027 440h0M956 418h0M904 479h0M816 410h0M1049 427h0M891 497h0M956 402h0M1037 400h0M938 500h0M902 353h0M810 432h0M980 419h0M843 406h0M784 384h0M1026 410h0M948 385h0M996 378h0M818 423h0M978 420h0M854 363h0M738 422h0M932 482h0M896 383h0M798 470h0M789 372h0M980 384h0M828 458h0M854 343h0M910 471h0M929 385h0"/><path stroke="#efe375" d="M800 479h0M1037 410h0M926 370h0M967 355h0M972 383h0M806 466h0M860 443h0M1032 367h0M924 407h0M974 465h0M772 464h0M849 410h0M916 430h0M772 355h0M961 470h0M889 462h0M859 432h0M988 449h0M868 380h0M863 428h0M1011 467h0M899 354h0M955 476h0M758 387h0M852 326h0M794 377h0M761 404h0M921 383h0M756 385h0M795 489h0M854 368h0M879 493h0M985 452h0M780 369h0M842 369h0"/><path stroke="#568b98" d="M805 479h0M818 477h0M754 406h0M894 414h0M895 359h0M802 368h0M754 407h0M811 366h0M839 376h0M1008 364h0M970 443h0M755 377h0M838 440h0"/><path stroke="#ff4d5e" d="M1003 422h0M904 446h0M799 334h0M790 425h0M762 373h0M800 433h0M906 436h0M826 466h0M779 473h0M770 410h0M997 438h0M853 492h0M878 338h0M868 363h0M741 378h0M1005 383h0M954 364h0M932 396h0M957 450h0M788 394h0M987 409h0M777 361h0M922 470h0M777 418h0M956 439h0"/><path stroke="#ff5f5e" d="M1021 442h0M910 400h0M910 460h0M800 384h0M802 401h0M891 375h0M867 365h0M882 369h0M831 381h0M874 358h0M967 477h0M818 415h0M896 370h0M794 470h0M844 446h0M953 375h0M798 391h0M885 397h0M814 350h0M970 452h0M819 376h0M817 437h0M925 338h0"/><path stroke="#ff7a66" d="M1012 395h0M789 398h0M831 401h0M1043 436h0M894 379h0M1030 402h0M938 425h0M968 358h0M990 464h0M922 357h0M802 420h0M858 378h0M843 415h0M822 413h0M940 352h0M976 386h0M764 452h0M816 393h0M745 454h0M831 369h0M830 348h0M1020 438h0M1031 396h0M920 343h0M969 448h0M826 333h0M810 474h0M970 362h0M807 495h0M910 422h0M944 425h0M842 340h0"/><path stroke="#9ccf90" d="M967 409h0M893 490h0M833 422h0M944 381h0M1003 397h0M824 419h0M1033 399h0M877 416h0M905 364h0M838 488h0M878 488h0M841 382h0M939 353h0M853 469h0M838 391h0M797 372h0M1001 480h0M903 386h0M870 484h0M896 477h0M916 378h0"/><path stroke="#fbb06c" d="M824 385h0M1013 440h0M814 343h0M907 376h0M929 472h0M901 429h0M905 441h0M961 477h0M774 425h0M908 495h0M879 362h0M965 347h0M1048 424h0M961 400h0M975 370h0M895 477h0M940 369h0M838 433h0M805 434h0M776 474h0M969 344h0M893 359h0M970 458h0M895 344h0M973 361h0M980 397h0M782 352h0M893 403h0M911 476h0M814 342h0M932 366h0M856 363h0M737 403h0M1005 369h0M1004 483h0"/><path stroke="#7fc597" d="M776 378h0M1034 399h0M905 393h0M887 444h0M885 327h0M769 478h0M863 394h0M905 472h0M959 362h0M996 465h0M803 408h0M870 431h0M908 342h0M877 436h0M926 490h0M767 445h0M1004 381h0M949 429h0M846 482h0M775 460h0"/><path stroke="#68a896" d="M735 384h0M993 386h0M958 467h0M873 394h0M902 461h0M827 466h0M953 476h0M835 420h0M783 407h0M792 489h0M902 373h0M831 411h0M749 427h0M954 378h0M853 369h0M971 480h0M729 408h0"/><path stroke="#c4d983" d="M887 365h0M779 452h0M775 404h0M989 476h0M836 486h0M978 412h0M805 423h0M797 435h0M945 352h0M784 445h0M920 437h0M859 399h0M856 445h0M805 389h0M1009 423h0M919 390h0M769 432h0M1013 458h0M955 383h0M1040 422h0"/><path stroke="#46739a" d="M812 434h0M865 350h0M950 491h0M996 412h0M758 446h0M920 401h0M855 501h0M770 373h0M990 430h0M903 376h0M1030 458h0M773 359h0M905 473h0"/><path stroke="#f6cc70" d="M1018 371h0M826 410h0M943 446h0M839 403h0M929 401h0M854 487h0M925 491h0M776 427h0M845 379h0M839 438h0M927 346h0M1046 376h0M795 391h0M1045 447h0M918 448h0M894 382h0M755 369h0M863 368h0M900 493h0M885 335h0M987 490h0M958 344h0M790 441h0M1001 367h0M918 492h0M968 386h0M835 411h0M1026 459h0M821 504h0M832 354h0M1028 392h0M943 467h0M998 403h0M950 472h0"/><path stroke="#fd9468" d="M849 396h0M926 396h0M799 421h0M901 439h0M871 364h0M828 393h0M1007 414h0M982 470h0M835 442h0M814 371h0M1008 473h0M850 382h0M803 467h0M872 424h0M1002 471h0M926 483h0M802 424h0M946 335h0M915 406h0M928 339h0M853 358h0M820 477h0M972 449h0M868 440h0M808 377h0M970 419h0M836 448h0M851 487h0M1014 458h0M814 383h0M1027 464h0"/><path stroke="#68a896" d="M970 348h0M848 470h0M841 390h0M878 455h0M819 383h0M766 451h0M969 409h0M920 427h0M816 366h0M889 426h0M1011 444h0M943 420h0M763 452h0M774 384h0M901 435h0M898 397h0"/><path stroke="#ff7a66" d="M798 405h0M851 486h0M1012 430h0M1034 365h0M799 363h0M940 374h0M826 445h0M851 353h0M933 463h0M957 419h0M901 511h0M876 359h0M973 404h0M808 448h0M842 370h0M908 465h0M999 496h0M790 430h0M998 372h0M876 364h0M963 392h0M940 488h0M981 411h0M903 390h0M918 464h0M819 488h0M870 358h0M933 333h0M1038 393h0M1007 461h0M803 366h0"/><path stroke="#ff5f5e" d="M877 422h0M759 440h0M866 461h0M829 468h0M1022 376h0M776 481h0M946 429h0M991 366h0M895 405h0M851 471h0M1017 438h0M1002 455h0M1033 429h0M916 329h0M1012 436h0M946 363h0M769 365h0M792 398h0M848 415h0M901 389h0M842 441h0M792 463h0"/><path stroke="#46739a" d="M914 383h0M823 359h0M752 425h0M964 485h0M936 433h0M869 448h0M855 394h0M926 459h0M974 366h0M835 409h0M835 432h0M762 425h0M1004 426h0M828 417h0M885 499h0M904 382h0M784 438h0M859 349h0"/><path stroke="#c4d983" d="M889 487h0M869 429h0M919 368h0M972 379h0M796 347h0M909 458h0M891 481h0M864 425h0M959 372h0M1034 389h0M928 413h0M879 408h0M774 398h0M798 462h0M756 390h0M894 502h0M823 462h0M1006 358h0M888 418h0M748 375h0M816 478h0M879 403h0M821 365h0M941 436h0"/><path stroke="#7fc597" d="M803 394h0M1006 418h0M979 389h0M773 434h0M962 461h0M931 487h0M829 378h0M830 334h0M987 468h0M954 438h0M943 408h0M1027 397h0M812 465h0M867 352h0M961 418h0M875 414h0M939 431h0M990 414h0M935 416h0M828 349h0"/><path stroke="#fbb06c" d="M808 417h0M863 475h0M929 357h0M1025 392h0M845 420h0M917 453h0M1039 445h0M790 490h0M1006 463h0M981 380h0M921 333h0M927 395h0M805 455h0M851 438h0M850 430h0M959 466h0M736 444h0M828 421h0M998 442h0M848 435h0M836 401h0M988 390h0M957 410h0M764 449h0M914 348h0M915 441h0M979 477h0M792 480h0M996 346h0M900 427h0M1040 454h0"/><path stroke="#fd9468" d="M839 385h0M878 507h0M919 359h0M818 353h0M852 396h0M878 389h0M864 338h0M829 371h0M873 343h0M920 387h0M833 457h0M966 382h0M917 427h0M817 504h0M985 370h0M955 472h0M828 391h0M792 437h0M1016 458h0M924 488h0M748 425h0M891 398h0M844 462h0M852 412h0M1007 480h0M970 394h0M939 338h0M957 369h0M898 488h0M1037 397h0M884 411h0M946 402h0M743 428h0M1022 386h0M884 327h0M848 368h0"/><path stroke="#ff4d5e" d="M740 404h0M1002 350h0M793 374h0M787 431h0M840 408h0M926 432h0M907 382h0M836 392h0M952 353h0M804 481h0M730 419h0M758 415h0M913 393h0M837 406h0M988 388h0M976 408h0M913 501h0M904 458h0"/><path stroke="#efe375" d="M946 503h0M821 391h0M939 502h0M932 412h0M783 346h0M810 372h0M836 359h0M899 411h0M877 425h0M780 448h0M970 464h0M802 476h0M824 340h0M919 367h0M874 452h0M863 345h0M934 365h0M832 411h0M863 434h0M987 362h0M833 440h0M857 390h0M893 366h0M980 372h0M908 412h0M902 382h0M984 384h0M777 380h0M881 459h0M776 460h0M977 410h0M967 367h0M880 384h0M962 411h0M876 343h0M996 394h0"/><path stroke="#9ccf90" d="M932 369h0M856 473h0M839 401h0M758 420h0M756 401h0M1027 424h0M856 432h0M856 444h0M819 487h0M793 468h0M868 355h0M825 439h0M945 363h0M911 356h0M940 358h0M921 382h0M962 393h0"/><path stroke="#568b98" d="M820 395h0M947 334h0M974 398h0M908 404h0M930 364h0M963 380h0M968 438h0M1054 404h0M876 388h0M885 404h0M782 356h0M945 434h0M874 337h0M872 502h0M862 370h0M888 460h0M1002 403h0M790 434h0"/><path stroke="#f6cc70" d="M889 391h0M877 339h0M807 422h0M944 395h0M905 473h0M877 452h0M1013 441h0M786 382h0M730 425h0M945 401h0M867 467h0M734 452h0M902 366h0M763 384h0M738 367h0M837 421h0M743 402h0M928 358h0M900 492h0M1002 404h0M1022 381h0M803 403h0M941 381h0M831 386h0M807 450h0M797 495h0M898 456h0M837 492h0M885 419h0M851 359h0M1042 463h0"/><path stroke="#efe375" d="M794 439h0M830 354h0M990 407h0M1024 372h0M924 477h0M959 379h0M893 441h0M995 353h0M935 484h0M865 428h0M788 338h0M996 472h0M905 498h0M894 367h0M997 358h0M981 439h0M912 363h0M1024 388h0M908 343h0M762 466h0M881 405h0M1022 449h0M925 374h0M966 393h0M889 425h0M755 402h0M992 450h0M1002 422h0M962 436h0M955 427h0"/><path stroke="#fbb06c" d="M849 477h0M980 460h0M781 361h0M791 356h0M871 407h0M793 451h0M788 359h0M1015 374h0M969 423h0M890 330h0M944 491h0M986 346h0M785 463h0M942 337h0M881 356h0M870 468h0M817 423h0M855 343h0M860 480h0M740 451h0M728 442h0M835 384h0M787 416h0M882 434h0M764 428h0M845 471h0M973 408h0M879 448h0M946 394h0M874 397h0"/><path stroke="#7fc597" d="M784 415h0M838 373h0M911 429h0M928 389h0M1020 388h0M921 423h0M785 347h0M765 379h0M1022 408h0M891 362h0M888 438h0M853 438h0M888 462h0M929 468h0M951 447h0M945 422h0M835 388h0M906 422h0M936 445h0M834 335h0M901 434h0M876 448h0M902 360h0M788 442h0M797 461h0M953 488h0M974 488h0M816 504h0"/><path stroke="#fd9468" d="M745 411h0M1023 390h0M933 435h0M1045 423h0M972 431h0M755 393h0M941 391h0M1051 414h0M963 453h0M848 375h0M846 482h0M809 449h0M885 410h0M744 407h0M907 464h0M846 409h0M855 340h0M961 458h0M970 460h0M960 340h0M992 445h0M1009 414h0M929 454h0M858 393h0M923 462h0M911 377h0M908 435h0M945 418h0M963 387h0M890 404h0M892 374h0M777 389h0M943 421h0M975 396h0M969 500h0M873 477h0M893 489h0M899 494h0M896 333h0"/><path stroke="#568b98" d="M852 439h0M882 367h0M971 467h0M944 371h0M1015 354h0M925 408h0M1026 391h0M722 415h0M852 430h0M738 424h0M1005 457h0M1015 369h0M891 506h0"/><path stroke="#c4d983" d="M871 466h0M776 355h0M973 374h0M900 344h0M788 390h0M939 383h0M840 476h0M782 431h0M853 497h0M792 405h0M888 341h0M790 435h0M992 405h0M910 432h0M920 452h0M947 443h0M795 391h0M891 436h0M763 397h0M862 336h0M876 442h0M830 349h0M920 487h0M958 449h0M832 466h0"/><path stroke="#ff7a66" d="M833 372h0M811 388h0M980 375h0M867 436h0M790 343h0M738 449h0M923 452h0M897 481h0M853 414h0M818 471h0M1017 406h0M984 472h0M962 404h0M913 334h0M892 399h0M886 391h0M900 485h0M814 428h0M904 380h0M954 391h0M826 393h0M784 365h0M965 364h0M1007 419h0M845 346h0M839 480h0M1054 386h0M875 387h0M837 450h0"/><path stroke="#9ccf90" d="M771 407h0M746 408h0M891 424h0M1002 431h0M783 369h0M947 463h0M936 344h0M847 511h0M922 380h0M1019 395h0M955 357h0M866 392h0M1020 427h0M836 510h0M976 345h0M949 467h0M976 419h0M954 443h0M752 444h0M998 436h0M765 459h0M785 389h0M964 465h0M846 382h0M959 432h0M762 430h0M819 388h0M978 355h0"/><path stroke="#46739a" d="M973 494h0M950 366h0M942 355h0M943 444h0M942 452h0M904 475h0M876 430h0M861 459h0M942 337h0"/><path stroke="#ff5f5e" d="M905 333h0M911 357h0M967 357h0M821 354h0M786 446h0M898 380h0M931 448h0M984 347h0M964 339h0M785 412h0M916 361h0M847 381h0M906 422h0M903 469h0M856 360h0M881 424h0M732 443h0M792 360h0M728 420h0M727 399h0M784 472h0M877 464h0M1010 375h0M933 460h0M787 396h0"/><path stroke="#ff4d5e" d="M988 432h0M955 495h0M864 497h0M743 466h0M816 483h0M738 388h0M787 363h0M929 485h0M792 491h0M922 442h0M1011 463h0M817 369h0M945 452h0M918 462h0M837 421h0M788 363h0M801 470h0M967 421h0"/><path stroke="#68a896" d="M901 392h0M1002 440h0M735 416h0M992 416h0M958 341h0M972 399h0M939 406h0M822 442h0M778 406h0M789 449h0M963 437h0M1015 404h0M945 350h0M826 475h0M796 371h0M909 386h0M790 451h0M933 481h0M898 477h0M899 352h0M824 427h0"/><path stroke="#f6cc70" d="M947 387h0M765 406h0M832 444h0M911 372h0M924 488h0M846 356h0M925 337h0M881 386h0M922 416h0M1030 421h0M830 409h0M892 409h0M835 349h0M763 422h0M844 345h0M954 496h0M838 411h0M846 368h0M794 419h0M1015 394h0M939 496h0M1009 460h0M974 378h0"/><path stroke="#ff4d5e" d="M941 406h0M836 383h0M875 339h0M930 354h0M750 426h0M880 398h0M803 373h0M838 347h0M887 352h0M904 495h0M837 373h0M780 434h0M1026 418h0M771 443h0M849 366h0M876 437h0M760 375h0M804 350h0M754 449h0M790 373h0"/><path stroke="#568b98" d="M943 426h0M905 420h0M776 351h0M1011 388h0M767 366h0M982 351h0M896 408h0M781 419h0M993 404h0M926 329h0M777 355h0M995 388h0M1042 403h0M907 431h0M766 472h0M791 479h0M971 379h0M814 356h0"/><path stroke="#ff7a66" d="M808 408h0M996 384h0M952 488h0M864 360h0M877 486h0M981 471h0M925 479h0M857 433h0M972 385h0M757 432h0M842 447h0M870 408h0M789 409h0M881 461h0M829 473h0M821 479h0M784 409h0M927 462h0M792 350h0M968 484h0M896 343h0M936 434h0M1007 410h0M775 419h0M947 494h0M814 396h0M832 385h0M784 432h0"/><path stroke="#68a896" d="M775 412h0M930 496h0M866 384h0M861 424h0M925 413h0M743 450h0M898 441h0M780 482h0M897 390h0M988 483h0M1037 457h0M791 438h0M816 336h0M888 333h0M926 370h0M957 450h0"/><path stroke="#fd9468" d="M831 339h0M975 460h0M950 395h0M737 390h0M786 408h0M882 389h0M778 380h0M895 459h0M989 385h0M930 323h0M899 456h0M791 363h0M971 395h0M789 487h0M831 471h0M1041 431h0M932 359h0M809 416h0M845 354h0M1021 424h0M864 400h0M952 379h0M947 474h0M914 437h0M747 452h0M828 481h0M791 476h0M903 360h0M914 459h0M848 420h0M815 365h0M742 428h0M811 439h0M961 473h0M818 475h0M781 376h0M747 413h0M874 436h0M904 413h0M737 443h0M926 346h0M798 393h0M1004 414h0"/><path stroke="#c4d983" d="M755 439h0M1019 390h0M877 336h0M912 456h0M903 329h0M937 489h0M998 459h0M1010 462h0M934 354h0M781 487h0M990 462h0M823 442h0M749 465h0M767 382h0M806 455h0M845 476h0M887 388h0M821 428h0M959 372h0M823 477h0M768 422h0M862 368h0"/><path stroke="#7fc597" d="M899 468h0M931 433h0M879 474h0M881 429h0M979 393h0M1026 433h0M785 452h0M813 418h0M840 407h0M869 360h0M850 444h0M829 460h0M1005 468h0M757 447h0M906 361h0M903 396h0M987 474h0M879 459h0M936 382h0M895 460h0M930 371h0M755 394h0M976 433h0"/><path stroke="#efe375" d="M750 391h0M884 458h0M832 372h0M1028 406h0M981 342h0M956 438h0M876 335h0M876 358h0M802 356h0M743 417h0M925 345h0M748 358h0M854 342h0M943 483h0M803 461h0M975 398h0M798 383h0M910 380h0M1010 362h0M824 490h0M883 396h0M883 385h0M745 418h0M940 427h0M842 401h0"/><path stroke="#9ccf90" d="M989 338h0M920 367h0M792 447h0M929 458h0M766 443h0M904 401h0M904 453h0M816 395h0M887 438h0M924 471h0M772 348h0M828 451h0M941 400h0M878 461h0M932 432h0M877 440h0M1033 417h0M958 480h0M887 427h0M840 500h0M1015 372h0M879 448h0M788 442h0M743 423h0"/><path stroke="#ff5f5e" d="M964 466h0M879 414h0M843 417h0M760 421h0M967 433h0M979 411h0M1016 463h0M932 474h0M978 442h0M912 371h0M838 415h0M895 472h0M774 443h0M868 357h0M985 460h0M785 452h0M892 358h0M810 441h0M868 470h0M964 465h0M891 397h0M1004 379h0M810 384h0M913 348h0M804 409h0"/><path stroke="#46739a" d="M837 442h0M988 394h0M973 381h0M851 504h0M990 440h0M784 387h0M973 377h0M842 460h0M764 442h0M852 413h0M949 478h0M1043 425h0M925 343h0M854 335h0M826 466h0"/><path stroke="#f6cc70" d="M885 377h0M767 450h0M819 422h0M1002 401h0M876 402h0M894 423h0M932 351h0M786 382h0M885 420h0M965 404h0M942 415h0M812 378h0M980 473h0M851 391h0M828 466h0M866 352h0M830 438h0M745 432h0M970 434h0M945 472h0M968 367h0M990 469h0M756 358h0M979 381h0M866 506h0M805 489h0M901 367h0M921 404h0"/><path stroke="#fbb06c" d="M861 423h0M878 416h0M888 341h0M886 469h0M863 362h0M831 449h0M861 391h0M739 397h0M1008 474h0M984 407h0M846 362h0M788 374h0M795 478h0M838 436h0M900 379h0M976 393h0M892 358h0M886 409h0M778 458h0M846 464h0M867 462h0M815 416h0M827 380h0M788 445h0M1027 403h0M739 419h0M873 488h0M791 434h0M807 476h0M889 462h0M885 423h0"/><path stroke="#7fc597" d="M947 428h0M962 431h0M882 483h0M988 410h0M818 375h0M921 426h0M1042 439h0M825 427h0M893 433h0M838 364h0M827 474h0M932 368h0M1036 409h0M812 370h0M786 401h0M837 432h0M829 345h0"/><path stroke="#ff4d5e" d="M839 404h0M777 382h0M871 455h0M791 415h0M874 463h0M963 426h0M868 460h0M852 407h0M810 408h0M881 484h0M990 409h0M912 486h0M900 464h0M885 512h0M1008 465h0M785 453h0M788 479h0M855 492h0"/><path stroke="#fbb06c" d="M836 369h0M741 431h0M796 492h0M835 353h0M1017 439h0M930 487h0M768 374h0M867 377h0M947 411h0M898 411h0M916 351h0M887 466h0M800 434h0M864 454h0M801 454h0M887 449h0M942 436h0"/><path stroke="#68a896" d="M853 333h0M902 357h0M1037 391h0M900 453h0M772 393h0M846 345h0M912 449h0M801 481h0M1002 397h0M808 345h0M1004 360h0M900 390h0M1024 357h0M964 364h0M851 355h0M941 476h0M917 472h0M765 439h0M833 432h0M776 367h0M984 374h0M987 438h0M835 413h0M847 496h0M887 452h0M870 416h0"/><path stroke="#efe375" d="M866 332h0M1049 409h0M858 466h0M769 414h0M800 483h0M941 379h0M805 354h0M793 390h0M935 364h0M1030 449h0M755 365h0M933 434h0M979 372h0M777 440h0M992 469h0M960 359h0M988 384h0M1000 403h0M797 471h0M865 368h0M838 468h0M854 426h0M910 438h0M782 404h0M947 411h0M805 492h0M820 377h0"/><path stroke="#f6cc70" d="M853 331h0M817 477h0M908 483h0M767 480h0M831 482h0M864 413h0M1032 412h0M805 420h0M971 359h0M1001 421h0M955 369h0M854 396h0M904 433h0M981 362h0M809 352h0M938 345h0M961 349h0M1024 387h0M838 442h0M856 437h0M1051 434h0M969 503h0M839 388h0M864 367h0M878 454h0M811 401h0M950 361h0M894 447h0M911 470h0"/><path stroke="#568b98" d="M761 408h0M842 372h0M873 363h0M1006 468h0M960 389h0M884 377h0M898 431h0M978 484h0M880 344h0M825 342h0M769 469h0"/><path stroke="#ff5f5e" d="M836 341h0M767 443h0M885 392h0M863 343h0M886 472h0M963 408h0M798 465h0M824 436h0M791 400h0M902 383h0M1023 396h0M951 495h0M912 407h0M901 393h0M949 344h0M913 438h0M979 490h0M981 417h0M934 437h0M808 460h0M894 371h0M819 366h0M832 490h0M737 430h0M853 347h0M909 361h0"/><path stroke="#ff7a66" d="M950 369h0M1026 439h0M794 402h0M890 482h0M1009 445h0M927 441h0M822 397h0M806 489h0M938 433h0M835 359h0M860 419h0M921 394h0M969 380h0M980 421h0M961 446h0M776 452h0M833 503h0M745 427h0M958 349h0M948 465h0M870 439h0M821 465h0M903 497h0M950 494h0M941 373h0M1030 447h0M886 487h0M988 469h0M812 378h0M989 405h0M1047 412h0M1003 403h0"/><path stroke="#46739a" d="M804 410h0M735 416h0M845 464h0M998 484h0M948 426h0M854 473h0M796 375h0M989 423h0M810 454h0M955 450h0M876 380h0M1013 370h0M926 464h0M744 433h0M844 506h0M1026 451h0M868 499h0M917 422h0"/><path stroke="#fd9468" d="M812 397h0M971 356h0M857 424h0M950 480h0M858 338h0M1008 458h0M761 416h0M838 504h0M922 492h0M838 405h0M978 342h0M973 381h0M1018 434h0M838 369h0M1030 434h0M865 355h0M928 350h0M1047 416h0M850 392h0M891 352h0M796 421h0M986 431h0M1005 473h0M850 345h0M907 491h0M838 364h0M771 375h0M919 437h0M778 402h0M816 347h0M894 415h0M822 352h0M770 430h0M873 432h0M996 378h0M730 447h0M862 399h0"/><path stroke="#9ccf90" d="M807 447h0M888 406h0M865 464h0M990 421h0M1005 473h0M772 378h0M773 383h0M1036 429h0M1024 443h0M850 437h0M925 357h0M1018 406h0M942 413h0M918 392h0M959 475h0M925 358h0M857 460h0M941 373h0M866 459h0M760 450h0M986 469h0M927 393h0M873 364h0M770 382h0M810 358h0M839 347h0M805 367h0M872 373h0M770 386h0M978 426h0M798 351h0M973 348h0M757 450h0M929 441h0M982 359h0M948 479h0M849 468h0M785 461h0M917 404h0"/><path stroke="#c4d983" d="M1016 410h0M780 406h0M803 391h0M804 399h0M986 368h0M838 508h0M949 429h0M804 433h0M901 344h0M841 340h0M760 477h0M1022 376h0M985 450h0M962 446h0M773 464h0M788 438h0M773 479h0M762 376h0M816 402h0M917 466h0M878 450h0"/><path stroke="#ff4d5e" d="M833 458h0M862 444h0M997 390h0M955 430h0M953 368h0M771 452h0M933 490h0M916 349h0M913 439h0M908 354h0M920 459h0M856 403h0M807 343h0M757 379h0M811 428h0M950 464h0M781 478h0M788 349h0M942 500h0M786 466h0"/><path stroke="#f6cc70" d="M969 423h0M871 336h0M887 493h0M775 412h0M898 500h0M797 414h0M953 474h0M1043 388h0M1009 419h0M892 350h0M850 482h0M840 341h0M808 468h0M899 487h0M890 368h0M791 389h0M867 478h0M863 439h0M843 416h0M942 510h0M971 411h0M869 460h0M852 482h0M908 403h0M842 359h0M917 456h0M802 486h0M832 383h0M897 343h0M751 462h0"/><path stroke="#46739a" d="M998 437h0M979 389h0M829 460h0M783 376h0M1021 456h0M987 358h0M1004 378h0M809 369h0M832 478h0M818 442h0M973 458h0M797 351h0"/><path stroke="#fd9468" d="M906 437h0M930 400h0M1026 454h0M911 426h0M763 421h0M981 494h0M771 486h0M745 411h0M836 417h0M946 428h0M920 332h0M1007 449h0M885 342h0M804 477h0M864 445h0M891 394h0M886 423h0M857 497h0M967 406h0M928 357h0M894 352h0M763 467h0M830 408h0M814 450h0M883 452h0M960 458h0M983 379h0M942 426h0M883 366h0M769 375h0M813 397h0M1004 384h0M947 365h0M842 460h0M993 431h0M805 348h0M808 368h0M1019 433h0M724 450h0M855 430h0M750 430h0M811 401h0M968 415h0M884 400h0"/><path stroke="#568b98" d="M848 384h0M739 413h0M907 410h0M853 454h0M843 431h0M909 507h0M1017 423h0M877 347h0M776 411h0M946 364h0M775 419h0M890 366h0M1031 467h0M883 387h0M877 355h0M1023 448h0M891 424h0"/><path stroke="#ff7a66" d="M1045 403h0M898 493h0M945 480h0M763 483h0M845 477h0M1027 389h0M850 392h0M739 426h0M1051 394h0M931 335h0M743 373h0M915 490h0M776 417h0M902 399h0M744 420h0M1005 389h0M873 346h0M842 485h0M806 381h0M842 451h0M990 457h0M795 389h0M877 330h0M793 425h0M859 356h0M961 414h0M819 392h0M962 458h0M731 388h0M872 339h0M1037 418h0M893 426h0M793 353h0M780 396h0M822 448h0"/><path stroke="#9ccf90" d="M906 477h0M908 477h0M909 445h0M878 363h0M870 464h0M805 485h0M886 490h0M818 439h0M748 393h0M838 462h0M1028 387h0M1015 409h0M955 404h0M773 364h0M976 440h0M1006 433h0M814 396h0M854 492h0M790 405h0M924 348h0M949 358h0"/><path stroke="#7fc597" d="M773 451h0M798 477h0M795 371h0M959 457h0M1015 393h0M937 364h0M997 406h0M795 476h0M971 422h0M787 479h0M922 378h0M781 376h0M903 491h0M925 413h0M899 358h0M949 421h0"/><path stroke="#68a896" d="M773 428h0M967 400h0M812 470h0M891 434h0M895 476h0M739 427h0M783 384h0M807 344h0M857 431h0M922 497h0M865 486h0M877 409h0M828 445h0M813 454h0M1037 372h0M813 400h0M1027 409h0M983 429h0M890 365h0M750 424h0M865 328h0"/><path stroke="#fbb06c" d="M914 330h0M979 488h0M896 485h0M874 485h0M992 422h0M767 402h0M988 406h0M784 445h0M854 336h0M797 479h0M804 372h0M779 387h0M955 356h0M827 392h0M830 394h0M841 348h0M871 485h0M833 481h0M770 447h0M855 483h0M921 415h0M861 365h0M759 477h0M757 473h0M796 351h0M937 352h0M891 440h0M916 456h0M977 387h0M786 434h0M769 355h0M766 490h0M750 407h0M778 387h0M856 423h0M897 348h0M926 460h0"/><path stroke="#efe375" d="M997 468h0M1026 379h0M978 440h0M996 385h0M938 339h0M1011 369h0M888 485h0M934 464h0M908 466h0M1046 416h0M833 492h0M893 399h0M944 410h0M910 343h0M767 420h0M859 373h0M859 322h0M981 382h0M988 376h0M825 418h0M963 384h0M781 477h0M847 477h0M726 408h0M999 369h0M786 481h0"/><path stroke="#ff5f5e" d="M806 415h0M969 449h0M993 402h0M915 353h0M971 417h0M969 346h0M950 383h0M878 357h0M809 421h0M915 407h0M990 428h0M777 369h0M900 491h0M895 450h0M913 369h0M783 381h0M850 422h0M851 467h0M963 472h0M800 395h0M1015 401h0M925 337h0"/><path stroke="#c4d983" d="M815 447h0M818 339h0M900 357h0M826 387h0M870 489h0M1016 376h0M945 444h0M987 461h0M957 351h0M992 406h0M751 461h0M960 379h0M763 411h0M1035 421h0M813 337h0M870 473h0M878 342h0M994 382h0"/><path stroke="#fbb06c" d="M927 412h0M797 436h0M948 442h0M877 334h0M804 487h0M933 488h0M880 494h0M869 474h0M949 457h0M886 473h0M916 406h0M971 450h0M891 493h0M838 340h0M842 398h0M871 499h0M924 451h0M808 449h0M921 430h0M934 444h0M930 331h0M1007 424h0M1029 452h0M865 459h0M829 489h0M916 486h0M782 383h0M897 493h0M989 484h0M930 469h0M898 430h0"/><path stroke="#568b98" d="M952 447h0M891 355h0M1028 426h0M867 460h0M1006 380h0M820 501h0M968 416h0M905 476h0M853 464h0M833 448h0M897 425h0M761 403h0"/><path stroke="#ff5f5e" d="M932 500h0M840 347h0M926 473h0M866 427h0M944 400h0M984 459h0M1006 419h0M983 431h0M1003 384h0M897 361h0M1030 447h0M790 366h0M1044 396h0M976 348h0M930 494h0M913 407h0M841 484h0M740 440h0M839 337h0M956 450h0M1003 417h0M908 458h0M841 398h0M937 363h0"/><path stroke="#c4d983" d="M1033 439h0M895 442h0M900 470h0M970 425h0M981 463h0M902 396h0M835 383h0M917 509h0M744 424h0M917 404h0M931 497h0M867 455h0M739 418h0M999 412h0M952 356h0M930 425h0M834 331h0M920 402h0M891 409h0M813 423h0M852 351h0M865 465h0M881 365h0M863 418h0M1019 415h0M929 385h0M736 453h0M939 409h0M818 413h0M999 489h0M857 340h0M933 380h0M771 438h0M959 413h0"/><path stroke="#7fc597" d="M992 455h0M988 480h0M881 332h0M766 348h0M823 431h0M807 426h0M839 340h0M782 360h0M780 429h0M854 482h0M884 398h0M836 373h0M731 404h0M748 406h0M837 481h0M753 444h0M833 351h0M879 460h0"/><path stroke="#efe375" d="M894 465h0M912 369h0M859 421h0M813 404h0M769 450h0M911 361h0M998 471h0M931 368h0M778 420h0M982 393h0M767 479h0M854 377h0M756 469h0M955 398h0M956 346h0M809 417h0M797 360h0M914 360h0M865 358h0M851 501h0M1000 461h0M854 483h0M831 421h0M848 360h0M799 444h0"/><path stroke="#fd9468" d="M908 377h0M843 342h0M1029 401h0M850 470h0M911 348h0M894 455h0M782 464h0M874 501h0M918 435h0M1018 387h0M850 356h0M895 360h0M950 414h0M1027 448h0M813 369h0M1038 462h0M844 436h0M898 382h0M934 482h0M771 386h0M988 385h0M894 414h0M962 392h0M989 414h0M906 427h0M947 491h0M771 416h0"/><path stroke="#46739a" d="M836 363h0M956 372h0M819 400h0M1001 421h0M1019 429h0M813 430h0M1012 432h0M781 434h0M951 384h0M818 498h0"/><path stroke="#ff7a66" d="M905 455h0M984 395h0M911 394h0M790 440h0M951 413h0M901 405h0M854 387h0M837 445h0M1025 452h0M812 385h0M946 408h0M831 368h0M1009 431h0M851 419h0M968 471h0M775 475h0M1036 421h0M823 358h0M951 397h0M830 475h0M736 424h0M851 396h0M980 409h0M1028 384h0M788 381h0M804 470h0M864 425h0M1012 382h0M788 432h0M993 388h0M1022 443h0M884 335h0"/><path stroke="#ff4d5e" d="M814 334h0M970 339h0M747 437h0M1016 464h0M986 408h0M914 374h0M763 441h0M950 410h0M823 394h0M959 465h0M1031 426h0M762 479h0M989 494h0M903 479h0M793 382h0M877 463h0M881 479h0M912 453h0M804 448h0M989 360h0M800 378h0M849 359h0M983 394h0"/><path stroke="#68a896" d="M962 448h0M1023 380h0M840 455h0M955 406h0M892 416h0M1005 423h0M936 412h0M986 494h0M951 404h0M1013 452h0M861 440h0M745 419h0M977 391h0M862 459h0M809 369h0M942 423h0M874 331h0M933 358h0M848 467h0M775 470h0M1023 449h0M853 393h0M875 350h0M880 375h0M925 350h0M1035 412h0"/><path stroke="#f6cc70" d="M816 416h0M739 436h0M804 374h0M812 371h0M785 452h0M968 383h0M896 415h0M825 476h0M980 480h0M1012 472h0M882 446h0M783 407h0M810 393h0M824 359h0M947 416h0M856 450h0M1027 459h0M832 374h0M875 329h0M927 444h0M912 426h0M884 371h0M798 421h0M840 413h0M982 343h0M933 467h0M870 508h0M807 353h0"/><path stroke="#9ccf90" d="M807 375h0M778 432h0M926 435h0M998 408h0M881 473h0M890 354h0M809 413h0M923 381h0M795 454h0M894 430h0M881 414h0M1023 432h0M939 405h0M838 338h0M866 346h0M974 353h0M806 421h0M783 463h0M855 458h0M781 479h0M853 393h0M840 471h0M767 446h0M828 369h0M1001 428h0M793 397h0M818 376h0M881 461h0"/><path stroke="#fbb06c" d="M823 456h0M904 422h0M886 446h0M853 387h0M904 475h0M973 487h0M829 424h0M865 414h0M940 452h0M916 405h0M998 478h0M953 468h0M935 389h0M821 408h0M822 482h0M861 467h0M783 430h0M919 472h0M787 481h0M837 411h0M970 447h0M777 451h0M903 393h0M1005 411h0M839 392h0M871 485h0M972 406h0M911 406h0M798 379h0M938 466h0"/><path stroke="#fd9468" d="M846 495h0M910 481h0M898 502h0M773 444h0M749 441h0M964 466h0M841 389h0M954 441h0M919 471h0M883 372h0M891 374h0M861 463h0M873 379h0M803 399h0M959 382h0M864 425h0M990 389h0M836 364h0M953 378h0M810 484h0M891 337h0M781 393h0M784 431h0M993 368h0M1031 442h0M739 460h0M906 435h0M886 393h0M995 353h0M818 489h0M935 398h0M754 371h0M964 335h0M809 386h0M752 441h0M777 465h0M917 405h0M973 433h0"/><path stroke="#7fc597" d="M843 346h0M873 394h0M837 411h0M884 458h0M854 436h0M909 491h0M847 338h0M859 439h0M774 413h0M774 394h0M887 436h0M958 480h0M803 386h0M854 491h0M841 359h0M859 502h0M828 363h0M1009 376h0"/><path stroke="#efe375" d="M912 359h0M866 357h0M840 481h0M874 398h0M798 445h0M879 333h0M846 474h0M985 414h0M868 453h0M871 386h0M833 361h0M782 463h0M894 458h0M843 387h0M925 468h0M769 414h0M791 486h0M758 393h0M793 475h0M993 470h0M975 426h0M782 404h0"/><path stroke="#68a896" d="M979 378h0M935 418h0M796 416h0M858 406h0M796 417h0M797 401h0M1000 385h0M809 452h0M781 470h0M767 447h0M1048 444h0M886 507h0M745 451h0M889 439h0M806 428h0M990 413h0M838 332h0M933 381h0M986 384h0M995 401h0"/><path stroke="#9ccf90" d="M829 422h0M974 351h0M801 396h0M902 480h0M1006 407h0M932 488h0M821 427h0M831 341h0M992 402h0M764 389h0M767 434h0M919 407h0M813 346h0M794 472h0M947 411h0M801 441h0M776 422h0M951 455h0M973 432h0M780 402h0M812 441h0M764 455h0M978 491h0"/><path stroke="#ff4d5e" d="M998 420h0M853 449h0M829 456h0M764 417h0M850 375h0M897 431h0M922 371h0M830 347h0M809 348h0M972 448h0M773 400h0M842 439h0M755 402h0M828 488h0M767 389h0M887 389h0M909 390h0M896 483h0M761 368h0M744 400h0M771 435h0M819 431h0M868 405h0M796 447h0M957 461h0M875 468h0M1016 397h0"/><path stroke="#ff5f5e" d="M738 427h0M909 472h0M999 473h0M763 364h0M798 368h0M1030 399h0M904 434h0M869 377h0M823 436h0M961 419h0M791 475h0M985 366h0M992 442h0M761 407h0M873 449h0M917 361h0M847 492h0M866 366h0M970 346h0M819 415h0M857 422h0M786 451h0M862 388h0M893 494h0"/><path stroke="#46739a" d="M901 466h0M812 450h0M891 440h0M921 474h0M945 438h0M871 410h0M819 469h0M846 438h0M896 355h0M772 351h0M876 377h0M960 461h0M747 386h0M893 377h0M797 418h0M1031 441h0M890 466h0M868 462h0"/><path stroke="#c4d983" d="M883 402h0M985 464h0M915 412h0M1013 420h0M824 481h0M930 460h0M1020 408h0M855 417h0M822 478h0M916 341h0M947 407h0M968 465h0M878 445h0M989 464h0M975 455h0M753 387h0M754 397h0M986 442h0M939 445h0M879 382h0M739 395h0M926 487h0M892 490h0"/><path stroke="#f6cc70" d="M865 487h0M761 417h0M1028 390h0M1020 377h0M818 443h0M960 423h0M952 415h0M884 473h0M807 441h0M888 396h0M1026 430h0M1028 442h0M984 404h0M966 405h0M788 374h0M794 465h0M892 510h0M792 449h0M1031 414h0M827 456h0M808 417h0M907 380h0M971 348h0M890 484h0M848 479h0M932 345h0M872 468h0M832 472h0M908 374h0M952 470h0M753 389h0M757 450h0"/><path stroke="#ff7a66" d="M791 395h0M1006 351h0M833 370h0M1044 405h0M991 473h0M743 404h0M802 481h0M845 384h0M893 448h0M793 398h0M825 446h0M869 430h0M806 395h0M769 381h0M936 428h0M833 461h0M972 457h0M866 380h0M819 350h0M978 343h0M859 377h0M958 464h0M931 408h0M788 469h0M932 458h0M793 392h0M965 388h0M876 484h0M930 444h0M859 371h0"/><path stroke="#568b98" d="M775 458h0M1042 401h0M856 475h0M812 476h0M852 497h0M882 389h0M873 408h0M788 447h0M926 405h0M855 469h0M984 357h0M830 352h0M946 402h0"/><path stroke="#9ccf90" d="M787 374h0M836 377h0M938 508h0M746 464h0M1021 386h0M988 395h0M910 488h0M734 418h0M903 465h0M1023 432h0M957 399h0M816 354h0M814 485h0M817 371h0M775 409h0M965 386h0M824 392h0M842 404h0M788 358h0M828 459h0M1008 375h0M931 427h0M1019 446h0M773 374h0M990 445h0M837 345h0M982 457h0M997 386h0M735 430h0M751 400h0"/><path stroke="#68a896" d="M907 426h0M850 504h0M832 435h0M961 428h0M769 409h0M984 453h0M805 397h0M905 363h0M774 405h0M936 482h0M906 439h0M817 398h0M755 427h0M890 414h0M892 385h0M997 398h0M784 355h0M836 450h0M1012 386h0M823 391h0M781 377h0M889 476h0M887 381h0M833 489h0M973 380h0M857 343h0M951 497h0M843 503h0M803 380h0M918 406h0M904 388h0"/><path stroke="#ff5f5e" d="M851 443h0M1000 479h0M844 443h0M880 476h0M869 487h0M985 471h0M940 355h0M929 344h0M857 418h0M771 473h0M904 354h0M1038 414h0M771 438h0M824 366h0M793 375h0M901 461h0M783 378h0M837 492h0M1005 388h0"/><path stroke="#f6cc70" d="M832 428h0M936 471h0M895 353h0M976 492h0M970 374h0M1040 404h0M924 369h0M855 494h0M951 386h0M756 449h0M785 354h0M803 464h0M784 386h0M929 430h0M1036 401h0M900 490h0M947 453h0M1018 459h0M919 357h0M827 490h0M802 385h0M992 406h0M905 489h0M784 474h0M957 415h0M846 457h0M840 393h0M851 494h0M770 373h0M930 477h0"/><path stroke="#c4d983" d="M775 400h0M934 479h0M781 441h0M880 394h0M811 428h0M946 398h0M946 499h0M912 389h0M1024 457h0M1032 437h0M842 402h0M874 334h0M1036 381h0M780 379h0M903 344h0M973 379h0M983 403h0M818 426h0M837 447h0M1011 386h0M750 375h0M918 429h0"/><path stroke="#ff7a66" d="M805 468h0M843 335h0M923 342h0M887 435h0M859 373h0M862 401h0M771 429h0M1038 394h0M1046 422h0M801 360h0M882 481h0M910 437h0M833 431h0M877 382h0M789 413h0M856 357h0M755 420h0M829 408h0M1001 385h0M981 482h0M782 396h0M840 471h0M863 495h0M880 449h0M816 371h0M944 431h0M1019 367h0"/><path stroke="#ff4d5e" d="M912 489h0M826 393h0M899 403h0M928 387h0M939 371h0M907 436h0M891 388h0M1005 363h0M734 475h0M804 411h0M895 475h0M881 416h0M913 436h0M824 364h0M889 464h0M940 467h0M833 460h0M876 383h0M858 410h0M893 458h0M937 480h0"/><path stroke="#568b98" d="M921 448h0M812 440h0M931 504h0M870 382h0M873 495h0M976 452h0M815 396h0M829 482h0M822 431h0M796 370h0M834 344h0M750 370h0M844 392h0M779 418h0M881 393h0"/><path stroke="#fd9468" d="M976 432h0M913 461h0M935 478h0M973 414h0M1008 406h0M843 442h0M780 460h0M828 428h0M946 465h0M797 450h0M947 426h0M892 498h0M929 335h0M1005 485h0M766 462h0M957 416h0M966 348h0M810 406h0M897 423h0M936 427h0M1018 424h0"/><path stroke="#efe375" d="M906 378h0M1000 422h0M1013 471h0M950 344h0M983 440h0M853 366h0M789 430h0M790 354h0M829 374h0M1020 386h0M987 350h0M891 465h0M898 445h0M806 447h0M898 450h0M958 397h0M779 410h0M971 331h0M776 394h0M840 353h0M851 440h0M855 395h0M784 362h0M878 435h0M921 451h0M790 445h0M887 477h0M840 372h0M735 458h0M772 423h0M862 392h0"/><path stroke="#46739a" d="M968 481h0M949 337h0M957 366h0M806 408h0M918 496h0M791 381h0M1023 436h0M856 338h0M1015 443h0M892 351h0M812 456h0M1030 383h0M763 405h0M817 380h0M1037 404h0M947 421h0M774 401h0M964 472h0M889 428h0"/><path stroke="#7fc597" d="M898 487h0M794 445h0M846 463h0M924 414h0M912 425h0M841 494h0M938 391h0M1006 413h0M745 402h0M1016 417h0M848 375h0M965 367h0M892 507h0M844 371h0M982 406h0M905 489h0M865 418h0M855 421h0M931 494h0"/><path stroke="#fbb06c" d="M911 479h0M904 345h0M755 452h0M886 498h0M984 355h0M837 394h0M1010 418h0M737 378h0M926 447h0M912 408h0M951 379h0M764 467h0M955 384h0M863 425h0M815 340h0M797 390h0M897 455h0M1022 423h0M890 484h0M889 331h0M987 390h0M856 386h0M882 389h0M745 436h0M871 341h0M983 441h0M948 413h0M965 371h0M876 494h0M814 443h0M1030 401h0M818 372h0M948 494h0"/><path stroke="#c4d983" d="M987 414h0M1049 388h0M759 452h0M957 433h0M802 397h0M863 360h0M988 382h0M995 432h0M885 423h0M919 352h0M1032 442h0M856 391h0M808 398h0M876 440h0M851 421h0M809 404h0M932 484h0M921 396h0M1029 444h0M751 428h0M799 457h0M769 419h0M870 340h0M938 414h0M976 492h0M769 436h0M998 453h0M859 440h0M888 428h0M996 363h0M936 476h0M982 356h0M1033 446h0M973 379h0M1046 392h0"/><path stroke="#7fc597" d="M751 414h0M931 481h0M1003 400h0M773 476h0M944 474h0M799 392h0M861 411h0M1028 440h0M825 417h0M819 474h0M927 498h0M1030 457h0M1011 401h0M727 429h0M749 462h0M950 483h0M936 409h0M810 413h0M1000 464h0M955 465h0M944 419h0M920 459h0M769 363h0M953 473h0M1036 403h0M816 356h0M940 399h0M877 350h0M995 402h0M747 443h0M855 409h0"/><path stroke="#ff5f5e" d="M878 374h0M887 469h0M853 389h0M769 456h0M860 435h0M959 448h0M1028 388h0M998 408h0M885 418h0M885 358h0M789 388h0M802 409h0M775 442h0M733 451h0M1036 392h0M899 424h0M1003 383h0M871 457h0M874 434h0M770 402h0M975 404h0M890 405h0M906 505h0M859 482h0M763 444h0M863 378h0M852 450h0M795 481h0M830 367h0M794 472h0"/><path stroke="#568b98" d="M894 367h0M1047 404h0M944 375h0M1008 453h0M944 350h0M978 350h0M863 501h0M964 359h0M880 471h0M745 384h0M957 339h0M766 481h0M824 377h0M837 406h0M921 407h0"/><path stroke="#68a896" d="M847 482h0M913 408h0M1000 452h0M954 414h0M900 336h0M778 463h0M941 501h0M815 350h0M890 348h0M1003 408h0M864 406h0M960 491h0M981 405h0M919 383h0M801 455h0"/><path stroke="#f6cc70" d="M803 365h0M1041 396h0M822 380h0M946 353h0M917 337h0M835 378h0M878 338h0M815 425h0M901 471h0M955 390h0M927 490h0M944 455h0M844 356h0M934 485h0M888 399h0M996 456h0M1042 475h0M1000 472h0M945 374h0M750 443h0M833 365h0M798 368h0M909 393h0M938 387h0M941 342h0M857 494h0M848 460h0M810 401h0M933 453h0M897 395h0"/><path stroke="#efe375" d="M891 484h0M862 488h0M739 454h0M919 384h0M770 374h0M756 399h0M831 402h0M927 450h0M958 383h0M997 369h0M846 455h0M908 317h0M840 468h0M843 457h0M941 361h0M808 449h0M804 364h0M957 492h0M761 369h0M915 337h0M832 471h0M970 413h0M1050 437h0M986 390h0M948 458h0M791 427h0M816 484h0"/><path stroke="#9ccf90" d="M952 336h0M1032 459h0M798 361h0M791 379h0M836 452h0M821 493h0M994 447h0M969 333h0M752 408h0M746 456h0M932 379h0M809 410h0M864 441h0M874 395h0M972 358h0M871 405h0M891 383h0M831 447h0M904 498h0M887 482h0M861 379h0M800 363h0M890 478h0M772 439h0M912 516h0M1032 451h0M800 402h0M939 458h0M778 381h0M769 387h0M832 471h0M854 491h0M973 344h0"/><path stroke="#fd9468" d="M943 382h0M886 367h0M838 428h0M978 379h0M838 474h0M765 464h0M875 424h0M901 418h0M1047 412h0M912 337h0M810 486h0M857 342h0M982 392h0M781 400h0M952 440h0M841 454h0M939 380h0M907 498h0"/><path stroke="#ff7a66" d="M915 431h0M837 346h0M783 394h0M798 407h0M903 414h0M845 469h0M778 418h0M982 459h0M970 413h0M778 406h0M756 434h0M742 430h0M1020 423h0M944 363h0M961 487h0M972 481h0M777 444h0M1009 419h0M736 466h0M797 444h0M955 499h0M988 461h0"/><path stroke="#ff4d5e" d="M905 485h0M859 456h0M1029 400h0M778 397h0M860 344h0M920 457h0M967 367h0M981 364h0M882 450h0M839 338h0M807 404h0M810 398h0M879 401h0M952 364h0M930 484h0M828 474h0M936 478h0M958 358h0M981 369h0M865 428h0M1003 453h0M738 435h0"/><path stroke="#fbb06c" d="M762 447h0M913 471h0M952 411h0M811 429h0M819 475h0M1016 416h0M822 332h0M835 462h0M913 457h0M956 451h0M760 463h0M929 446h0M888 485h0M933 466h0M861 351h0M738 379h0M805 441h0M804 360h0M960 362h0M750 391h0M980 383h0M837 414h0M997 346h0M989 398h0M951 417h0M893 485h0M979 353h0M961 497h0"/><path stroke="#46739a" d="M862 386h0M794 354h0M960 424h0M870 395h0M790 375h0M953 407h0M867 375h0M927 494h0M970 348h0M927 494h0M894 468h0M808 350h0"/><path stroke="#fbb06c" d="M835 487h0M846 462h0M898 429h0M992 420h0M784 464h0M907 459h0M772 363h0M931 434h0M998 425h0M966 380h0M794 352h0M745 364h0M920 357h0M896 359h0M928 455h0M756 363h0M1030 368h0M928 493h0M976 376h0M918 343h0M859 443h0M819 409h0M1050 391h0M988 373h0M946 359h0M906 481h0M992 439h0M885 486h0M993 467h0M897 433h0M992 369h0"/><path stroke="#c4d983" d="M809 476h0M783 416h0M885 372h0M982 416h0M771 349h0M869 387h0M820 401h0M919 386h0M866 361h0M951 377h0M803 400h0M858 327h0M1031 405h0M934 465h0M804 443h0M824 337h0M769 401h0M784 400h0M1032 417h0M965 468h0M1018 451h0M874 372h0M848 355h0M935 340h0M925 338h0"/><path stroke="#fd9468" d="M952 449h0M747 434h0M812 460h0M896 482h0M845 424h0M903 472h0M900 459h0M810 458h0M928 458h0M828 472h0M1008 479h0M911 377h0M767 469h0M845 488h0M1030 409h0M918 474h0M875 358h0M893 435h0M990 402h0M895 502h0M1039 408h0M777 465h0M927 420h0M755 468h0M909 324h0M826 462h0M844 347h0M848 452h0M828 441h0M892 438h0M851 467h0M936 385h0M889 470h0M884 381h0M733 404h0M817 413h0M823 379h0"/><path stroke="#ff7a66" d="M849 425h0M952 483h0M779 368h0M913 381h0M844 445h0M931 370h0M748 362h0M872 413h0M922 395h0M734 410h0M927 401h0M917 411h0M877 454h0M839 451h0M922 349h0M929 378h0M842 449h0M845 367h0M998 369h0M865 383h0M749 459h0M728 403h0M769 414h0M788 453h0M807 421h0M868 399h0M920 471h0M795 347h0M958 350h0"/><path stroke="#9ccf90" d="M848 371h0M1016 407h0M989 472h0M996 390h0M826 367h0M957 352h0M772 368h0M996 414h0M866 485h0M979 355h0M1029 418h0M962 374h0M1046 395h0M859 327h0M1005 422h0M875 357h0M935 392h0M781 416h0M777 398h0M836 396h0M830 370h0M977 402h0M917 365h0M923 447h0"/><path stroke="#46739a" d="M822 484h0M936 442h0M820 366h0M846 495h0M863 439h0M1011 433h0M866 464h0M743 417h0"/><path stroke="#efe375" d="M1009 449h0M750 439h0M878 401h0M779 349h0M744 403h0M927 402h0M873 460h0M825 490h0M940 496h0M948 436h0M1044 413h0M824 366h0M964 438h0M894 480h0M845 497h0M964 372h0M1006 368h0M861 407h0M791 419h0M889 454h0M985 410h0M874 430h0M860 413h0M984 464h0M901 405h0M1034 398h0M742 419h0M742 438h0M972 401h0M1031 465h0M876 462h0"/><path stroke="#f6cc70" d="M847 359h0M931 425h0M876 474h0M1021 423h0M826 376h0M858 376h0M914 414h0M818 438h0M1004 487h0M869 446h0M779 367h0M874 359h0M870 328h0M786 399h0M930 464h0M850 427h0M1005 489h0M953 408h0M805 445h0M791 391h0M820 475h0M974 461h0M933 494h0M791 464h0M1021 380h0M828 413h0M781 350h0"/><path stroke="#ff5f5e" d="M926 403h0M874 493h0M761 439h0M1026 426h0M910 457h0M946 417h0M910 381h0M953 437h0M1020 371h0M881 453h0M843 385h0M825 468h0M906 353h0M842 404h0M805 387h0M833 382h0M853 492h0M981 392h0M1029 425h0M888 455h0M845 424h0M875 353h0M981 339h0M906 339h0M851 381h0M890 495h0M855 342h0M852 482h0M797 419h0M837 339h0M765 395h0M830 365h0M774 431h0"/><path stroke="#ff4d5e" d="M807 472h0M1013 432h0M953 467h0M908 377h0M1022 391h0M884 359h0M942 473h0M793 420h0M783 432h0M789 374h0M811 438h0M1019 440h0M1032 386h0M807 398h0M775 351h0M818 391h0M760 366h0M761 420h0M951 430h0M813 474h0"/><path stroke="#68a896" d="M893 456h0M892 504h0M875 410h0M966 410h0M909 422h0M885 447h0M852 374h0M979 445h0M961 337h0M884 376h0M847 371h0M919 351h0M917 394h0M968 436h0M931 397h0M838 408h0"/><path stroke="#7fc597" d="M809 393h0M801 409h0M1008 462h0M789 406h0M952 446h0M986 489h0M976 385h0M1043 445h0M1029 432h0M938 400h0M939 438h0M943 447h0M990 356h0M876 424h0M957 435h0M959 446h0M807 377h0M754 459h0M776 387h0M861 359h0M858 438h0M913 395h0"/><path stroke="#568b98" d="M831 455h0M866 352h0M782 482h0M767 456h0M987 405h0M923 492h0M976 359h0M922 383h0M1039 449h0M930 461h0M802 422h0M850 425h0M744 451h0M978 452h0M800 437h0"/></g>
<rect x="734.7" y="304.5" width="5.6" height="5.6" fill="#c43a3c"/>
<rect x="884.7" y="304.5" width="5.6" height="5.6" fill="#c43a3c"/>
<rect x="1034.7" y="304.5" width="5.6" height="5.6" fill="#c43a3c"/>
<rect x="734.7" y="417" width="5.6" height="5.6" fill="#c43a3c"/>
<rect x="1034.7" y="417" width="5.6" height="5.6" fill="#c43a3c"/>
<rect x="734.7" y="529.5" width="5.6" height="5.6" fill="#c43a3c"/>
<rect x="884.7" y="529.5" width="5.6" height="5.6" fill="#c43a3c"/>
<rect x="1034.7" y="529.5" width="5.6" height="5.6" fill="#c43a3c"/>
<g fill="none" stroke="#f2c4bc" stroke-width=".9"><circle cx="887" cy="419.5" r="2.8"/><path d="M883.2 415.7l7.6 7.6M890.8 415.7l-7.6 7.6" stroke="#e06a6a"/></g>
<circle cx="392.5" cy="191.3" r="3.9" fill="#dedede" stroke="#d0d0d0" stroke-width=".6"/>
<circle cx="406" cy="191.3" r="3.9" fill="#dedede" stroke="#d0d0d0" stroke-width=".6"/>
<circle cx="419.5" cy="191.3" r="3.9" fill="#dedede" stroke="#d0d0d0" stroke-width=".6"/>
<path d="M430.3 207.3h6.5M430.3 209.8h6.5M430.3 212.3h6.5" stroke="#b0b0b0" stroke-width="1"/>
<circle cx="397.7" cy="243.706" r="1.4" fill="#f0f0f0"/><circle cx="393.6" cy="246.052" r="1.4" fill="#f0f0f0"/><circle cx="401.8" cy="246.052" r="1.4" fill="#f0f0f0"/><circle cx="397.7" cy="248.5" r="1.4" fill="#f0f0f0"/><circle cx="393.6" cy="250.948" r="1.4" fill="#f0f0f0"/><circle cx="401.8" cy="250.948" r="1.4" fill="#f0f0f0"/><circle cx="397.7" cy="253.294" r="1.4" fill="#f0f0f0"/>
<circle cx="397.7" cy="269.6" r="5.8" fill="#d6d6d6"/>
<path d="M399.46 291.06L403.97 291.97M399.13 291.79L401.84 293.84M398.52 292.3L400.62 296.4M397.74 292.5L397.83 295.9M396.96 292.34L395.06 296.53M396.32 291.86L393.71 294.04M395.96 291.14L391.5 292.28M395.94 290.34L392.6 289.67M396.27 289.61L392.6 286.83M396.88 289.1L395.33 286.07M397.66 288.9L397.54 284.3M398.44 289.06L399.84 285.96M399.08 289.54L402.6 286.59M399.44 290.26L402.74 289.42" stroke="#e8e8e8" stroke-width="1.15" stroke-linecap="round" fill="none"/>
<path transform="translate(397.7 311.8) rotate(15)" d="M0 0c-1.5-2-3-4.5-1.5-6.2c1.5-1.6 4.5-.6 4.8 1.7c.3 2-1.3 3.5-3.3 4.5z" fill="#e8e8e8"/><path transform="translate(397.7 311.8) rotate(135)" d="M0 0c-1.5-2-3-4.5-1.5-6.2c1.5-1.6 4.5-.6 4.8 1.7c.3 2-1.3 3.5-3.3 4.5z" fill="#e8e8e8"/><path transform="translate(397.7 311.8) rotate(255)" d="M0 0c-1.5-2-3-4.5-1.5-6.2c1.5-1.6 4.5-.6 4.8 1.7c.3 2-1.3 3.5-3.3 4.5z" fill="#e8e8e8"/>
<path d="M391.2 330.1c2-2.4 4.5-2.4 6.5-.6s4.5 1.8 6.5-.6M391.2 333.7c2-2.4 4.5-2.4 6.5-.6s4.5 1.8 6.5-.6M391.2 337.3c2-2.4 4.5-2.4 6.5-.6s4.5 1.8 6.5-.6" fill="none" stroke="#f0f0f0" stroke-width="1.5" stroke-linecap="round"/>
<g fill="none" stroke="#9a9a9a" stroke-width=".7"><circle cx="397.7" cy="354" r="5.6" stroke="#666"/><circle cx="397.7" cy="354" r="4.1"/><circle cx="397.7" cy="354" r="2.6" stroke="#b4b4b4" stroke-width=".9"/></g><circle cx="397.7" cy="354" r="1.2" fill="#0c0c0c"/>
<circle cx="397.7" cy="375.1" r="1.8" fill="#7c7c7c"/><circle cx="397.7" cy="370.4" r="1.5" fill="#7c7c7c"/><circle cx="401.37" cy="372.17" r="1.5" fill="#7c7c7c"/><circle cx="402.28" cy="376.15" r="1.5" fill="#7c7c7c"/><circle cx="399.74" cy="379.33" r="1.5" fill="#7c7c7c"/><circle cx="395.66" cy="379.33" r="1.5" fill="#7c7c7c"/><circle cx="393.12" cy="376.15" r="1.5" fill="#7c7c7c"/><circle cx="394.03" cy="372.17" r="1.5" fill="#7c7c7c"/>
<path d="M397.7 390.2v12M391.7 396.2h12" stroke="#b8b8b8" stroke-width="3.2" stroke-linecap="round"/>
<circle cx="397.2" cy="417.8" r="5.8" fill="none" stroke="#e0e0e0" stroke-width="1.2" stroke-dasharray="1.6 1.75"/><circle cx="401.7" cy="414.1" r="1.9" fill="#e8e8e8"/>
<g stroke="#b0b0b0" stroke-width=".9"><circle cx="394.1" cy="434.8" r="3.2" fill="#555"/><circle cx="401.3" cy="434.8" r="3.2" fill="none"/><circle cx="394.1" cy="442" r="3.2" fill="#8a8a8a"/><circle cx="401.3" cy="442" r="3.2" fill="#e0e0e0"/></g>
<g stroke="#b0b0b0" fill="none" stroke-width="1"><path d="M391.2 454.5h13" stroke-width="1.3"/><path d="M393.7 455.5v5.5M397.7 455.5v5.5M401.7 455.5v5.5"/></g><g fill="#b0b0b0"><circle cx="393.7" cy="462.5" r="1.4"/><circle cx="397.7" cy="462.5" r="1.4"/><circle cx="401.7" cy="462.5" r="1.4"/></g>
<rect x="392.2" y="476.9" width="11" height="7.5" rx="1.6" fill="none" stroke="#c8c8c8" stroke-width="1.2"/>
<g fill="none" stroke="#a8a8a8" stroke-width="1"><path d="M498.5 314V367M499 389L497.5 420M498 443L496.5 466"/><path d="M495.3 370.5a3.2 3.2 0 0 1 6.4 0M494.3 423.5a3.2 3.2 0 0 1 6.4 0M493.5 469.5a3.2 3.2 0 0 1 6.4 0" fill="#3a3a3a"/></g>
<path d="M484 297.5V311.5" stroke="#4c4c4c" stroke-width="1"/>
<circle cx="472.5" cy="298.987" r="1.61" fill="#f4f4f4"/><circle cx="467.785" cy="301.685" r="1.61" fill="#f4f4f4"/><circle cx="477.215" cy="301.685" r="1.61" fill="#f4f4f4"/><circle cx="472.5" cy="304.5" r="1.61" fill="#f4f4f4"/><circle cx="467.785" cy="307.315" r="1.61" fill="#f4f4f4"/><circle cx="477.215" cy="307.315" r="1.61" fill="#f4f4f4"/><circle cx="472.5" cy="310.013" r="1.61" fill="#f4f4f4"/>
<path d="M484 372.5V387" stroke="#4c4c4c" stroke-width="1"/>
<circle cx="472.5" cy="379.75" r="6" fill="#d6d6d6"/>
<path d="M483 425.5V440.5" stroke="#4c4c4c" stroke-width="1"/>
<path d="M473.26 433.36L477.77 434.27M472.93 434.09L475.64 436.14M472.32 434.6L474.42 438.7M471.54 434.8L471.63 438.2M470.76 434.64L468.86 438.83M470.12 434.16L467.51 436.34M469.76 433.44L465.3 434.58M469.74 432.64L466.4 431.97M470.07 431.91L466.4 429.13M470.68 431.4L469.13 428.37M471.46 431.2L471.34 426.6M472.24 431.36L473.64 428.26M472.88 431.84L476.4 428.89M473.24 432.56L476.54 431.72" stroke="#f0f0f0" stroke-width="1.15" stroke-linecap="round" fill="none"/>
<path d="M481.5 471.5V488.5" stroke="#4c4c4c" stroke-width="1"/>
<circle cx="470" cy="480" r="6" fill="#d6d6d6"/>
<g><rect x="377" y="669.5" width="7.5" height="6" rx=".8" fill="#b8b8b8"/><rect x="380" y="672.5" width="7.5" height="6" rx=".8" fill="#777" stroke="#262626" stroke-width=".7"/><path d="M379.8 671l2.5 1.5-2.5 1.5z" fill="#262626"/></g>
<g fill="none" stroke="#b8b8b8" stroke-width="1.1"><rect x="393.3" y="669.3" width="9.5" height="6.5" rx=".8"/><path d="M398 676v2.5M395 679h6"/></g>
<g fill="#b8b8b8"><path d="M408.3 669.5h12l-.5 4.5c-.2 1.6-1.3 2.5-2.7 2.5-1.6 0-2.3-.8-2.8-2.3-.5 1.5-1.2 2.3-2.8 2.3-1.4 0-2.5-.9-2.7-2.5z"/><circle cx="411.3" cy="673" r="1.9" fill="#262626"/><circle cx="417.3" cy="673" r="1.9" fill="#262626"/><path d="M412.8 678.5h3l-1.5 1.8z"/></g>
<path d="M465 673.5l2.9 2.7 2.9-2.7" fill="none" stroke="#b0b0b0" stroke-width="1.1"/>
<g fill="none" stroke="#b8b8b8" stroke-width="1"><rect x="479" y="669.5" width="9.5" height="7"/><path d="M483.8 668v10M477.5 673h12.5"/></g><path d="M486.3 678.8h3l-1.5 1.7z" fill="#b8b8b8"/>
<g fill="none" stroke="#2d8ceb" stroke-width="1.1"><path d="M496.5 677.5l.8-6.5 8-1.5.3 8z"/></g><g fill="#2d8ceb"><circle cx="496.5" cy="677.5" r="1"/><circle cx="497.3" cy="671" r="1"/><circle cx="505.3" cy="669.5" r="1"/><circle cx="505.6" cy="677.5" r="1"/></g>
<g fill="#b8b8b8"><path d="M564.5 671h2.3l.9-1.4h3.6l.9 1.4h2.3c.5 0 .8.3.8.8v6c0 .5-.3.8-.8.8h-10c-.5 0-.8-.3-.8-.8v-6c0-.5.3-.8.8-.8z"/><circle cx="569.5" cy="674.8" r="2.3" fill="#262626"/><circle cx="569.5" cy="674.8" r="1.3"/></g>
<g fill="none" stroke="#3e3e3e" stroke-width="1.1"><circle cx="584" cy="676" r="2.8"/><circle cx="588" cy="672.5" r="2.8"/></g>
<circle cx="602" cy="671.5" r="2.7" fill="#e02020"/><circle cx="600" cy="675.6" r="2.7" fill="#20c030"/><circle cx="604.3" cy="675.6" r="2.7" fill="#3070f0"/><path d="M604.5 679h3l-1.5 1.7z" fill="#ddd"/>
<text x="616" y="678.04" font-size="9" fill="#c8c8c8">完整</text>
<path d="M666.5 673.5l2.9 2.7 2.9-2.7" fill="none" stroke="#b0b0b0" stroke-width="1.1"/>
<g><rect x="680.5" y="669.3" width="10" height="9" rx="1" fill="none" stroke="#b8b8b8" stroke-width="1.1"/><rect x="683" y="672" width="5" height="3.8" fill="#b8b8b8"/></g>
<g><rect x="696.5" y="669.3" width="11" height="9" rx="1" fill="none" stroke="#b8b8b8" stroke-width="1.1"/><path d="M699 671.3h2v2h-2zM703 671.3h2v2h-2zM701 673.3h2v2h-2zM699 675.3h2v1.5h-2zM703 675.3h2v1.5h-2z" fill="#b8b8b8"/></g>
<text x="716" y="678.04" font-size="9" fill="#c8c8c8">活动摄像机</text>
<path d="M780 673.5l2.9 2.7 2.9-2.7" fill="none" stroke="#b0b0b0" stroke-width="1.1"/>
<text x="804.5" y="678.04" font-size="9" fill="#c8c8c8">个视图</text>
<path d="M836 673.5l2.9 2.7 2.9-2.7" fill="none" stroke="#b0b0b0" stroke-width="1.1"/>
<g fill="none" stroke="#b8b8b8" stroke-width="1"><path d="M850 670.5h11.5M851.5 669v3M860 669v3"/><rect x="852.5" y="673.5" width="6.5" height="4.5"/></g>
<g fill="none" stroke="#b8b8b8" stroke-width="1"><rect x="867" y="670" width="10" height="8" rx=".8"/><path d="M873.5 671.5l-2.5 2.8h2l-1.5 2.7"/></g><path d="M875 678.8h3l-1.5 1.7z" fill="#b8b8b8"/>
<g fill="none" stroke="#b8b8b8" stroke-width="1"><path d="M883.5 672v5.5h10V672"/><rect x="887" y="669.5" width="3" height="5" fill="#b8b8b8"/><path d="M885.5 674v3M891.5 674v3"/></g>
<g fill="#b8b8b8"><rect x="902" y="669.5" width="4" height="3.3"/><rect x="899" y="675.5" width="4" height="3.3"/><rect x="905" y="675.5" width="4" height="3.3"/><path d="M903.5 672.5h1v1.5h3v1.5h-1v-.8h-5v.8h-1V674h3z"/></g>
<circle cx="922" cy="674.5" r="5" fill="#b8b8b8"/><circle cx="922" cy="674.5" r="1.7" fill="#262626"/><g stroke="#262626" stroke-width=".9"><path d="M922 669.5l2.2 3.7M926.3 672l-1.3 4.2M926.3 677l-4.3-.8M922 679.5l-2.2-3.7M917.7 677l1.3-4.2M917.7 672l4.3.8"/></g>
<rect x="119" y="692" width="8" height="7.8" fill="#c6aa82"/>
<path d="M193.3 694.8l3.8 3.8M197.1 694.8l-3.8 3.8" stroke="#8a8a8a" stroke-width=".9"/>
<rect x="204.5" y="692" width="8" height="7.8" fill="#c6aa82"/>
<text x="220.5" y="699.54" font-size="9" fill="#e0e0e0">10<tspan x="230.76">周年</tspan></text>
<path d="M255 694.3h6.5M255 696.8h6.5M255 699.3h6.5" stroke="#b0b0b0" stroke-width="1"/>
<g fill="none" stroke="#c0c0c0" stroke-width="1"><circle cx="186.3" cy="718.5" r="2.6"/><path d="M184.5 720.5l-2.8 2.8" stroke-width="1.2"/></g><path d="M190 721h3l-1.5 1.6z" fill="#c0c0c0"/>
<g fill="#c4c4c4"><rect x="614" y="716" width="4.5" height="2.2"/><rect x="622" y="716.5" width="3.5" height="2"/><rect x="622" y="720.5" width="3.5" height="2"/><path d="M618.5 716.8h3.5v.8h-1.5v4h1.5v.8h-2.3v-4.8h-1.2z"/><path d="M622.5 724h3l-1.5 1.6z"/></g>
<g fill="none" stroke="#c4c4c4" stroke-width=".9"><path d="M646.5 718l4.5-1.8 4.5 1.8v5l-4.5 2-4.5-2zM646.5 718l4.5 2 4.5-2M651 720v5"/></g><g stroke="#c4c4c4" stroke-width=".9"><path d="M642.5 713v5M640 715.5h5M640.8 713.8l3.4 3.4M644.2 713.8l-3.4 3.4"/></g>
<g fill="#c4c4c4"><path d="M665.5 719.5c0-2.5 2.5-4 5.5-4s5.5 1.5 5.5 4z"/><rect x="665" y="720.3" width="12" height="1.3"/><rect x="665" y="722.3" width="12" height="1.3"/><rect x="665" y="724.3" width="12" height="1.3"/></g><path d="M671 715v5" stroke="#262626" stroke-width=".8"/>
<g><path d="M685.5 717.5v8h8" fill="none" stroke="#c4c4c4" stroke-width="1.2"/><rect x="687.5" y="714.5" width="8.5" height="9" fill="#c4c4c4"/><rect x="689.5" y="717.5" width="4.5" height="2.5" fill="#262626"/></g>
<g fill="#888" stroke="#c4c4c4" stroke-width=".9"><ellipse cx="709" cy="721.5" rx="4" ry="3.6" transform="rotate(-35 709 721.5)"/><ellipse cx="711" cy="720" rx="4" ry="3.6" transform="rotate(-35 711 720)"/><ellipse cx="713" cy="718.5" rx="4" ry="3.6" transform="rotate(-35 713 718.5)"/></g>
<g fill="none" stroke="#c4c4c4" stroke-width="1"><rect x="730" y="715.5" width="11.5" height="9.5" rx=".8"/><path d="M730.5 718c5 0 5.5 6 10.5 6.5"/><path d="M732 714v1.5M736 714v1.5M740 714v1.5" stroke-width=".8"/></g>
<g fill="#d0d0d0"><path d="M104.3 740.5c1.8-3 6.2-3 8 0-1.8 3-6.2 3-8 0z"/><circle cx="108.3" cy="740.5" r="1.7" fill="#343434"/><circle cx="108.3" cy="740.5" r=".8"/></g>
<g fill="#d0d0d0"><path d="M115.2 738.8h2l2.5-2.3v8l-2.5-2.3h-2z"/></g><g fill="none" stroke="#d0d0d0" stroke-width=".8"><path d="M120.8 738.5a3 3 0 0 1 0 4M122 737a5 5 0 0 1 0 7"/></g>
<circle cx="130.9" cy="740.5" r="2.7" fill="#d0d0d0"/>
<g><rect x="138.6" y="739.8" width="7.2" height="5" rx=".6" fill="#d0d0d0"/><path d="M140.2 740v-1.8a2 2 0 0 1 4 0v1.8" fill="none" stroke="#d0d0d0" stroke-width="1.2"/><rect x="141.6" y="741.3" width="1.2" height="2" fill="#343434"/></g>
<path d="M151 736V745" stroke="#1c1c1c" stroke-width="1"/>
<path d="M161.2 736.5h4.3l5 5-4.3 4.3-5-5z" fill="#d0d0d0"/><circle cx="163.3" cy="738.6" r=".9" fill="#343434"/>
<path d="M175 736V745" stroke="#1c1c1c" stroke-width="1"/>
<path d="M199 736V745" stroke="#1c1c1c" stroke-width="1"/>
<text x="203.8" y="744.44" font-size="9" fill="#9c9c9c">源名称</text>
<path d="M427 736V745" stroke="#1c1c1c" stroke-width="1"/>
<g fill="#cfcfcf"><path d="M430 739.8c0-2 1.8-3 3.8-3s3.8 1 3.8 3h-3.3v3.5h-1v-3.5z"/><path d="M430 741.5h2.2v1h-2.2zM435.5 741.5h2.2v1h-2.2zM430 743.5h7.7v1h-7.7z"/></g>
<g stroke="#cfcfcf" stroke-width=".9" fill="none"><circle cx="445.5" cy="740.7" r="1.6"/><path d="M445.5 737v1.3M445.5 743.2v1.3M441.8 740.7h1.3M448 740.7h1.3M442.9 738.1l.9.9M447.2 742.4l.9.9M448.1 738.1l-.9.9M443.8 742.4l-.9.9"/></g>
<path d="M452.5 737l7 7" stroke="#cfcfcf" stroke-width="1.1"/>
<g><rect x="473.8" y="736.8" width="8.2" height="7.8" fill="#cfcfcf"/><rect x="475.8" y="738.8" width="4.2" height="3.8" fill="#666"/><path d="M474.6 737.5v6.4M481.2 737.5v6.4" stroke="#343434" stroke-width=".6" stroke-dasharray=".8 .8"/></g>
<g fill="#888" stroke="#cfcfcf" stroke-width=".8"><ellipse cx="487.5" cy="742" rx="3" ry="2.7" transform="rotate(-35 487.5 742)"/><ellipse cx="489.3" cy="740.7" rx="3" ry="2.7" transform="rotate(-35 489.3 740.7)"/><ellipse cx="491" cy="739.5" rx="3" ry="2.7" transform="rotate(-35 491 739.5)"/></g>
<circle cx="502" cy="740.7" r="3.7" fill="none" stroke="#cfcfcf" stroke-width=".9"/><path d="M499.4 743.3a3.7 3.7 0 0 0 5.2-5.2z" fill="#cfcfcf"/>
<g fill="none" stroke="#cfcfcf" stroke-width=".9"><path d="M510 738.7l4-1.7 4 1.7v4.2l-4 1.8-4-1.8zM510 738.7l4 1.8 4-1.8M514 740.5v4.2"/></g>
<path d="M529 736V745" stroke="#1c1c1c" stroke-width="1"/>
<text x="533.5" y="744.44" font-size="9" fill="#9c9c9c">模式</text>
<path d="M654 736V745" stroke="#1c1c1c" stroke-width="1"/>
<text x="658.8" y="744.44" font-size="9" fill="#9c9c9c">父级和链接</text>
<path d="M741.5 736V745" stroke="#1c1c1c" stroke-width="1"/>
<g fill="none" stroke="#c0c0c0"><circle cx="217.3" cy="756" r="3.6" stroke-width="1.2"/><path d="M215.8 751h3" stroke-width="1.3"/></g>
<path transform="translate(671.6 754.1)" d="M1.3 .2a1.3 1.3 0 1 0-1.3 1.3a2.6 2.6 0 1 0-2.6-2.6a4 4 0 1 0 6.5-2.3" fill="none" stroke="#b8b8b8" stroke-width=".95"/>
<g fill="none" stroke="#c0c0c0"><circle cx="217.3" cy="770.85" r="3.6" stroke-width="1.2"/><path d="M215.8 765.85h3" stroke-width="1.3"/></g>
<path transform="translate(671.6 768.95)" d="M1.3 .2a1.3 1.3 0 1 0-1.3 1.3a2.6 2.6 0 1 0-2.6-2.6a4 4 0 1 0 6.5-2.3" fill="none" stroke="#b8b8b8" stroke-width=".95"/>
<g fill="none" stroke="#c0c0c0"><circle cx="217.3" cy="785.7" r="3.6" stroke-width="1.2"/><path d="M215.8 780.7h3" stroke-width="1.3"/></g>
<path transform="translate(671.6 783.8)" d="M1.3 .2a1.3 1.3 0 1 0-1.3 1.3a2.6 2.6 0 1 0-2.6-2.6a4 4 0 1 0 6.5-2.3" fill="none" stroke="#b8b8b8" stroke-width=".95"/>
<g fill="none" stroke="#c0c0c0"><circle cx="217.3" cy="800.55" r="3.6" stroke-width="1.2"/><path d="M215.8 795.55h3" stroke-width="1.3"/></g>
<path transform="translate(671.6 798.65)" d="M1.3 .2a1.3 1.3 0 1 0-1.3 1.3a2.6 2.6 0 1 0-2.6-2.6a4 4 0 1 0 6.5-2.3" fill="none" stroke="#b8b8b8" stroke-width=".95"/>
<path d="M200.5 811.5v5.6l5.8-2.8z" fill="#b0b0b0"/>
<path d="M759.5 711.3h-1.5a3.3 3.3 0 0 0 0 6.6h1.5z" fill="#2d8ceb"/>
<path d="M759.5 733.3h-1.5a3 3 0 0 0-3 3v4.4a3 3 0 0 0 3 3h1.5z" fill="#2d8ceb"/>
<rect x="759.5" y="745.4" width="2.2" height="2.2" fill="#22d422" rx=".5"/>
<rect x="765.7" y="745.4" width="2.2" height="2.2" fill="#22d422" rx=".5"/>
<rect x="870.7" y="745.4" width="2.2" height="2.2" fill="#22d422" rx=".5"/>
<rect x="998.3" y="745.4" width="2.2" height="2.2" fill="#22d422" rx=".5"/>
<path d="M866.6 722h8.6v5.2l-4.3 4.8-4.3-4.8z" fill="#2d8ceb"/><path d="M869.3 725.5h3.2l-1.6 4z" fill="#1c4f85"/>
<path d="M869 750.7h4.6v1.3l-1.5 1.7v2.8l1.5 1.7v1.3h-4.6v-1.3l1.5-1.7v-2.8l-1.5-1.7z" fill="#bcc6d4"/>
<path d="M869 765.55h4.6v1.3l-1.5 1.7v2.8l1.5 1.7v1.3h-4.6v-1.3l1.5-1.7v-2.8l-1.5-1.7z" fill="#bcc6d4"/>
<path d="M869 780.4h4.6v1.3l-1.5 1.7v2.8l1.5 1.7v1.3h-4.6v-1.3l1.5-1.7v-2.8l-1.5-1.7z" fill="#bcc6d4"/>
<path d="M869 795.25h4.6v1.3l-1.5 1.7v2.8l1.5 1.7v1.3h-4.6v-1.3l1.5-1.7v-2.8l-1.5-1.7z" fill="#bcc6d4"/>
<path d="M869 810.1h4.6v1.3l-1.5 1.7v2.8l1.5 1.7v1.3h-4.6v-1.3l1.5-1.7v-2.8l-1.5-1.7z" fill="#bcc6d4"/></g></svg>
</div></body></html>
